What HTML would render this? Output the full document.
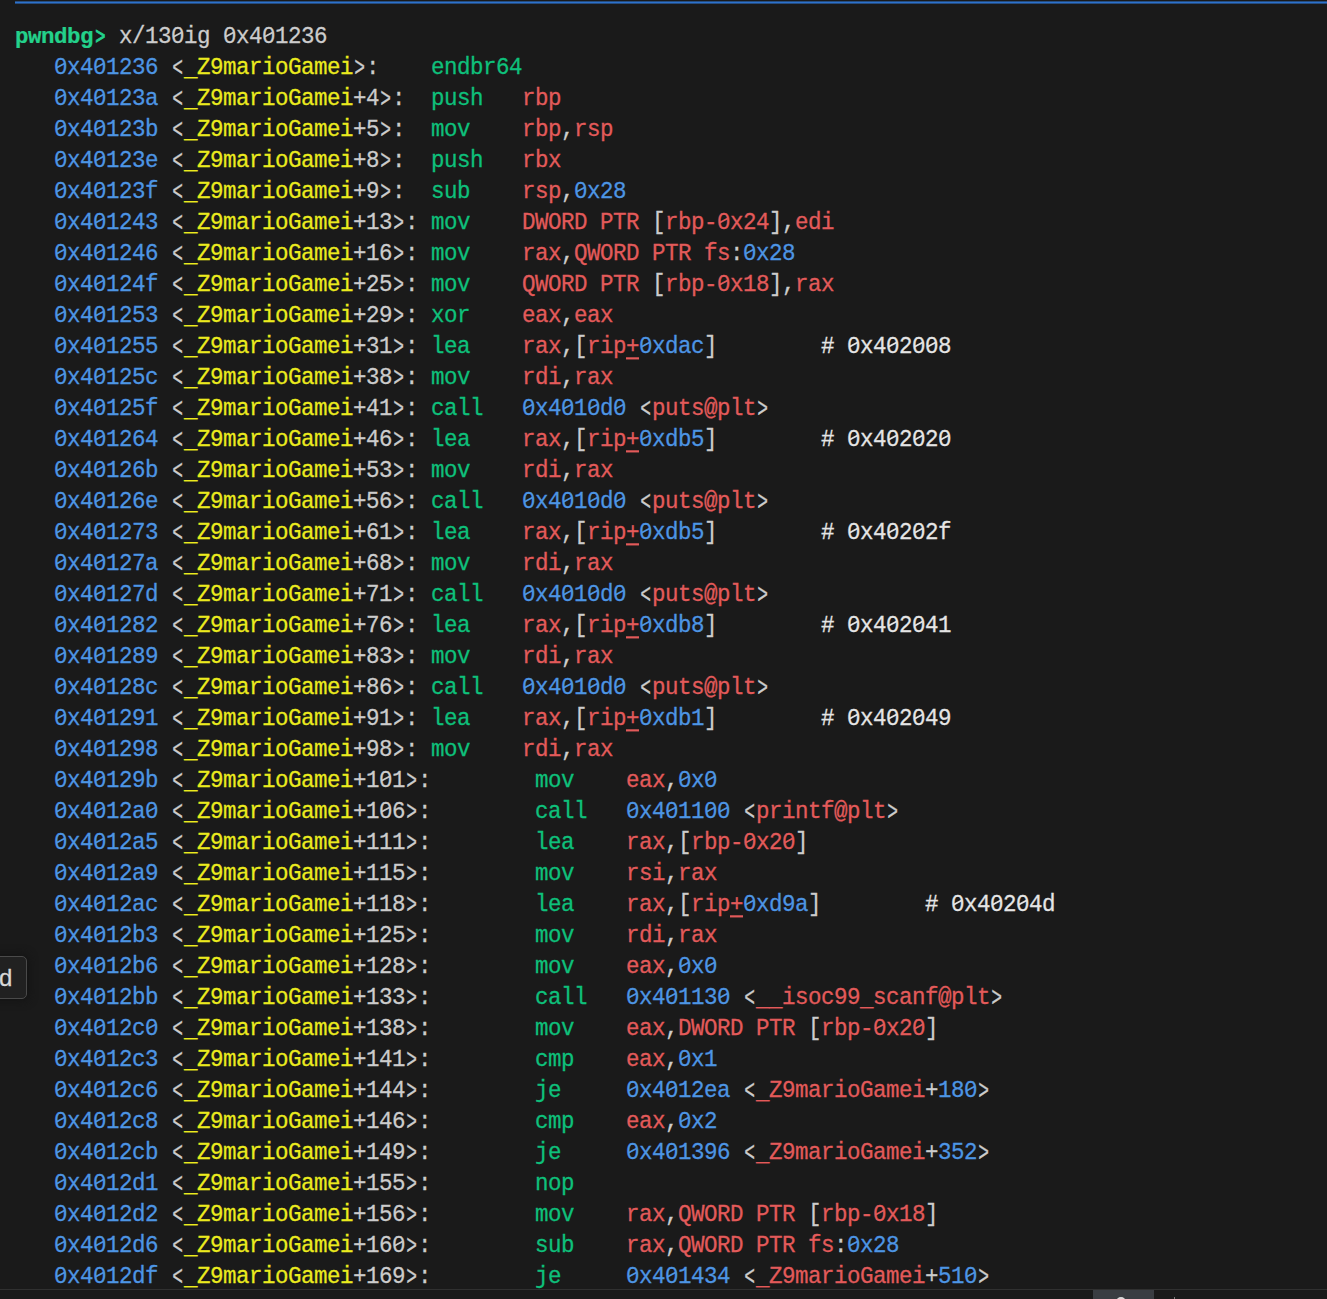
<!DOCTYPE html>
<html><head><meta charset="utf-8"><style>
html,body{margin:0;padding:0;}
body{width:1327px;height:1299px;background:#1a1a1a;position:relative;overflow:hidden;font-family:"Liberation Mono",monospace;font-size:22.5px;}
.t{position:absolute;white-space:pre;line-height:31px;height:31px;transform:scaleY(1.08);transform-origin:0 21.5px;-webkit-text-stroke:0.25px currentColor;}
.u{text-decoration:underline;text-decoration-thickness:1.5px;text-underline-offset:3.5px;}
.bd{font-weight:bold;transform:scaleY(0.99);}
.bd .ab{font-weight:normal;-webkit-text-stroke:0.9px currentColor;transform:translate(0.7px,0.6px) scale(0.76,1.1);}
#topline{position:absolute;left:15px;top:1px;width:1312px;height:3px;background:linear-gradient(#1d2a3a,#2d72cc 35%,#2d72cc 65%,#1d2a3a);}
svg.z{position:absolute;}
.ab{display:inline-block;transform:translateY(1.4px) scale(0.8,1.12);transform-origin:6.5px 13.6px;}
.us{position:relative;top:2px;}
#sep{position:absolute;left:0;top:1289px;width:1327px;height:1px;background:#303030;}
#tab{position:absolute;left:1093px;top:1290px;width:61px;height:9px;background:#3a3d42;}
#icon{position:absolute;left:1116px;top:1297px;width:10px;height:10px;border-radius:50%;background:#d8d8d8;}
#tick{position:absolute;left:1174px;top:1297px;width:1px;height:2px;background:#777;}
#dbox{position:absolute;left:-20px;top:956px;width:47px;height:43px;border:1px solid #4a4a4a;border-radius:5px;background:#212121;box-sizing:border-box;box-shadow:0 0 8px 2px #141414;}
#dbox span{position:absolute;left:18px;top:6px;color:#d8d8d8;font-family:"Liberation Sans",sans-serif;font-size:24px;line-height:30px;-webkit-text-stroke:0.3px #d8d8d8;}
</style></head><body>
<div id="topline"></div>

<div class="t bd" style="left:15px;top:21.5px;color:#23d18b;letter-spacing:-0.5000px">pwndbg<span class="ab">&gt;</span></div>
<div class="t" style="left:106px;top:21.5px;color:#cccccc;letter-spacing:-0.5000px"> x/130ig 0x401236</div>
<svg class="z" style="left:171px;top:25px" width="13" height="20"><rect x="4" y="8" width="5" height="4" fill="#1a1a1a"/><line x1="2.6" y1="11.8" x2="11.0" y2="7.2" stroke="#cccccc" stroke-width="1.85"/></svg>
<svg class="z" style="left:223px;top:25px" width="13" height="20"><rect x="4" y="8" width="5" height="4" fill="#1a1a1a"/><line x1="2.6" y1="11.8" x2="11.0" y2="7.2" stroke="#cccccc" stroke-width="1.85"/></svg>
<svg class="z" style="left:262px;top:25px" width="13" height="20"><rect x="4" y="8" width="5" height="4" fill="#1a1a1a"/><line x1="2.6" y1="11.8" x2="11.0" y2="7.2" stroke="#cccccc" stroke-width="1.85"/></svg>
<div class="t" style="left:54px;top:52.5px;color:#4d95e4;letter-spacing:-0.5000px">0x401236</div>
<svg class="z" style="left:54px;top:56px" width="13" height="20"><rect x="4" y="8" width="5" height="4" fill="#1a1a1a"/><line x1="2.6" y1="11.8" x2="11.0" y2="7.2" stroke="#4d95e4" stroke-width="1.85"/></svg>
<svg class="z" style="left:93px;top:56px" width="13" height="20"><rect x="4" y="8" width="5" height="4" fill="#1a1a1a"/><line x1="2.6" y1="11.8" x2="11.0" y2="7.2" stroke="#4d95e4" stroke-width="1.85"/></svg>
<div class="t" style="left:171px;top:52.5px;color:#cccccc;letter-spacing:-0.5000px"><span class="ab">&lt;</span></div>
<div class="t" style="left:184px;top:52.5px;color:#ebeb1e;letter-spacing:-0.5000px"><span class="us">_</span>Z9marioGamei</div>
<div class="t" style="left:353px;top:52.5px;color:#cccccc;letter-spacing:-0.5000px"><span class="ab">&gt;</span>:</div>
<div class="t" style="left:431px;top:52.5px;color:#0ec07b;letter-spacing:-0.5000px">endbr64</div>
<div class="t" style="left:54px;top:83.5px;color:#4d95e4;letter-spacing:-0.5000px">0x40123a</div>
<svg class="z" style="left:54px;top:87px" width="13" height="20"><rect x="4" y="8" width="5" height="4" fill="#1a1a1a"/><line x1="2.6" y1="11.8" x2="11.0" y2="7.2" stroke="#4d95e4" stroke-width="1.85"/></svg>
<svg class="z" style="left:93px;top:87px" width="13" height="20"><rect x="4" y="8" width="5" height="4" fill="#1a1a1a"/><line x1="2.6" y1="11.8" x2="11.0" y2="7.2" stroke="#4d95e4" stroke-width="1.85"/></svg>
<div class="t" style="left:171px;top:83.5px;color:#cccccc;letter-spacing:-0.5000px"><span class="ab">&lt;</span></div>
<div class="t" style="left:184px;top:83.5px;color:#ebeb1e;letter-spacing:-0.5000px"><span class="us">_</span>Z9marioGamei</div>
<div class="t" style="left:353px;top:83.5px;color:#cccccc;letter-spacing:-0.5000px">+4</div>
<div class="t" style="left:379px;top:83.5px;color:#cccccc;letter-spacing:-0.5000px"><span class="ab">&gt;</span>:</div>
<div class="t" style="left:431px;top:83.5px;color:#0ec07b;letter-spacing:-0.5000px">push</div>
<div class="t" style="left:522px;top:83.5px;color:#e35a5a;letter-spacing:-0.5000px">rbp</div>
<div class="t" style="left:54px;top:114.5px;color:#4d95e4;letter-spacing:-0.5000px">0x40123b</div>
<svg class="z" style="left:54px;top:118px" width="13" height="20"><rect x="4" y="8" width="5" height="4" fill="#1a1a1a"/><line x1="2.6" y1="11.8" x2="11.0" y2="7.2" stroke="#4d95e4" stroke-width="1.85"/></svg>
<svg class="z" style="left:93px;top:118px" width="13" height="20"><rect x="4" y="8" width="5" height="4" fill="#1a1a1a"/><line x1="2.6" y1="11.8" x2="11.0" y2="7.2" stroke="#4d95e4" stroke-width="1.85"/></svg>
<div class="t" style="left:171px;top:114.5px;color:#cccccc;letter-spacing:-0.5000px"><span class="ab">&lt;</span></div>
<div class="t" style="left:184px;top:114.5px;color:#ebeb1e;letter-spacing:-0.5000px"><span class="us">_</span>Z9marioGamei</div>
<div class="t" style="left:353px;top:114.5px;color:#cccccc;letter-spacing:-0.5000px">+5</div>
<div class="t" style="left:379px;top:114.5px;color:#cccccc;letter-spacing:-0.5000px"><span class="ab">&gt;</span>:</div>
<div class="t" style="left:431px;top:114.5px;color:#0ec07b;letter-spacing:-0.5000px">mov</div>
<div class="t" style="left:522px;top:114.5px;color:#e35a5a;letter-spacing:-0.5000px">rbp</div>
<div class="t" style="left:561px;top:114.5px;color:#cccccc;letter-spacing:-0.5000px">,</div>
<div class="t" style="left:574px;top:114.5px;color:#e35a5a;letter-spacing:-0.5000px">rsp</div>
<div class="t" style="left:54px;top:145.5px;color:#4d95e4;letter-spacing:-0.5000px">0x40123e</div>
<svg class="z" style="left:54px;top:149px" width="13" height="20"><rect x="4" y="8" width="5" height="4" fill="#1a1a1a"/><line x1="2.6" y1="11.8" x2="11.0" y2="7.2" stroke="#4d95e4" stroke-width="1.85"/></svg>
<svg class="z" style="left:93px;top:149px" width="13" height="20"><rect x="4" y="8" width="5" height="4" fill="#1a1a1a"/><line x1="2.6" y1="11.8" x2="11.0" y2="7.2" stroke="#4d95e4" stroke-width="1.85"/></svg>
<div class="t" style="left:171px;top:145.5px;color:#cccccc;letter-spacing:-0.5000px"><span class="ab">&lt;</span></div>
<div class="t" style="left:184px;top:145.5px;color:#ebeb1e;letter-spacing:-0.5000px"><span class="us">_</span>Z9marioGamei</div>
<div class="t" style="left:353px;top:145.5px;color:#cccccc;letter-spacing:-0.5000px">+8</div>
<div class="t" style="left:379px;top:145.5px;color:#cccccc;letter-spacing:-0.5000px"><span class="ab">&gt;</span>:</div>
<div class="t" style="left:431px;top:145.5px;color:#0ec07b;letter-spacing:-0.5000px">push</div>
<div class="t" style="left:522px;top:145.5px;color:#e35a5a;letter-spacing:-0.5000px">rbx</div>
<div class="t" style="left:54px;top:176.5px;color:#4d95e4;letter-spacing:-0.5000px">0x40123f</div>
<svg class="z" style="left:54px;top:180px" width="13" height="20"><rect x="4" y="8" width="5" height="4" fill="#1a1a1a"/><line x1="2.6" y1="11.8" x2="11.0" y2="7.2" stroke="#4d95e4" stroke-width="1.85"/></svg>
<svg class="z" style="left:93px;top:180px" width="13" height="20"><rect x="4" y="8" width="5" height="4" fill="#1a1a1a"/><line x1="2.6" y1="11.8" x2="11.0" y2="7.2" stroke="#4d95e4" stroke-width="1.85"/></svg>
<div class="t" style="left:171px;top:176.5px;color:#cccccc;letter-spacing:-0.5000px"><span class="ab">&lt;</span></div>
<div class="t" style="left:184px;top:176.5px;color:#ebeb1e;letter-spacing:-0.5000px"><span class="us">_</span>Z9marioGamei</div>
<div class="t" style="left:353px;top:176.5px;color:#cccccc;letter-spacing:-0.5000px">+9</div>
<div class="t" style="left:379px;top:176.5px;color:#cccccc;letter-spacing:-0.5000px"><span class="ab">&gt;</span>:</div>
<div class="t" style="left:431px;top:176.5px;color:#0ec07b;letter-spacing:-0.5000px">sub</div>
<div class="t" style="left:522px;top:176.5px;color:#e35a5a;letter-spacing:-0.5000px">rsp</div>
<div class="t" style="left:561px;top:176.5px;color:#cccccc;letter-spacing:-0.5000px">,</div>
<div class="t" style="left:574px;top:176.5px;color:#4d95e4;letter-spacing:-0.5000px">0x28</div>
<svg class="z" style="left:574px;top:180px" width="13" height="20"><rect x="4" y="8" width="5" height="4" fill="#1a1a1a"/><line x1="2.6" y1="11.8" x2="11.0" y2="7.2" stroke="#4d95e4" stroke-width="1.85"/></svg>
<div class="t" style="left:54px;top:207.5px;color:#4d95e4;letter-spacing:-0.5000px">0x401243</div>
<svg class="z" style="left:54px;top:211px" width="13" height="20"><rect x="4" y="8" width="5" height="4" fill="#1a1a1a"/><line x1="2.6" y1="11.8" x2="11.0" y2="7.2" stroke="#4d95e4" stroke-width="1.85"/></svg>
<svg class="z" style="left:93px;top:211px" width="13" height="20"><rect x="4" y="8" width="5" height="4" fill="#1a1a1a"/><line x1="2.6" y1="11.8" x2="11.0" y2="7.2" stroke="#4d95e4" stroke-width="1.85"/></svg>
<div class="t" style="left:171px;top:207.5px;color:#cccccc;letter-spacing:-0.5000px"><span class="ab">&lt;</span></div>
<div class="t" style="left:184px;top:207.5px;color:#ebeb1e;letter-spacing:-0.5000px"><span class="us">_</span>Z9marioGamei</div>
<div class="t" style="left:353px;top:207.5px;color:#cccccc;letter-spacing:-0.5000px">+13</div>
<div class="t" style="left:392px;top:207.5px;color:#cccccc;letter-spacing:-0.5000px"><span class="ab">&gt;</span>:</div>
<div class="t" style="left:431px;top:207.5px;color:#0ec07b;letter-spacing:-0.5000px">mov</div>
<div class="t" style="left:522px;top:207.5px;color:#e35a5a;letter-spacing:-0.5000px">DWORD PTR</div>
<div class="t" style="left:652px;top:207.5px;color:#cccccc;letter-spacing:-0.5000px">[</div>
<div class="t" style="left:665px;top:207.5px;color:#e35a5a;letter-spacing:-0.5000px">rbp-0x24</div>
<svg class="z" style="left:717px;top:211px" width="13" height="20"><rect x="4" y="8" width="5" height="4" fill="#1a1a1a"/><line x1="2.6" y1="11.8" x2="11.0" y2="7.2" stroke="#e35a5a" stroke-width="1.85"/></svg>
<div class="t" style="left:769px;top:207.5px;color:#cccccc;letter-spacing:-0.5000px">]</div>
<div class="t" style="left:782px;top:207.5px;color:#cccccc;letter-spacing:-0.5000px">,</div>
<div class="t" style="left:795px;top:207.5px;color:#e35a5a;letter-spacing:-0.5000px">edi</div>
<div class="t" style="left:54px;top:238.5px;color:#4d95e4;letter-spacing:-0.5000px">0x401246</div>
<svg class="z" style="left:54px;top:242px" width="13" height="20"><rect x="4" y="8" width="5" height="4" fill="#1a1a1a"/><line x1="2.6" y1="11.8" x2="11.0" y2="7.2" stroke="#4d95e4" stroke-width="1.85"/></svg>
<svg class="z" style="left:93px;top:242px" width="13" height="20"><rect x="4" y="8" width="5" height="4" fill="#1a1a1a"/><line x1="2.6" y1="11.8" x2="11.0" y2="7.2" stroke="#4d95e4" stroke-width="1.85"/></svg>
<div class="t" style="left:171px;top:238.5px;color:#cccccc;letter-spacing:-0.5000px"><span class="ab">&lt;</span></div>
<div class="t" style="left:184px;top:238.5px;color:#ebeb1e;letter-spacing:-0.5000px"><span class="us">_</span>Z9marioGamei</div>
<div class="t" style="left:353px;top:238.5px;color:#cccccc;letter-spacing:-0.5000px">+16</div>
<div class="t" style="left:392px;top:238.5px;color:#cccccc;letter-spacing:-0.5000px"><span class="ab">&gt;</span>:</div>
<div class="t" style="left:431px;top:238.5px;color:#0ec07b;letter-spacing:-0.5000px">mov</div>
<div class="t" style="left:522px;top:238.5px;color:#e35a5a;letter-spacing:-0.5000px">rax</div>
<div class="t" style="left:561px;top:238.5px;color:#cccccc;letter-spacing:-0.5000px">,</div>
<div class="t" style="left:574px;top:238.5px;color:#e35a5a;letter-spacing:-0.5000px">QWORD PTR fs</div>
<div class="t" style="left:730px;top:238.5px;color:#cccccc;letter-spacing:-0.5000px">:</div>
<div class="t" style="left:743px;top:238.5px;color:#4d95e4;letter-spacing:-0.5000px">0x28</div>
<svg class="z" style="left:743px;top:242px" width="13" height="20"><rect x="4" y="8" width="5" height="4" fill="#1a1a1a"/><line x1="2.6" y1="11.8" x2="11.0" y2="7.2" stroke="#4d95e4" stroke-width="1.85"/></svg>
<div class="t" style="left:54px;top:269.5px;color:#4d95e4;letter-spacing:-0.5000px">0x40124f</div>
<svg class="z" style="left:54px;top:273px" width="13" height="20"><rect x="4" y="8" width="5" height="4" fill="#1a1a1a"/><line x1="2.6" y1="11.8" x2="11.0" y2="7.2" stroke="#4d95e4" stroke-width="1.85"/></svg>
<svg class="z" style="left:93px;top:273px" width="13" height="20"><rect x="4" y="8" width="5" height="4" fill="#1a1a1a"/><line x1="2.6" y1="11.8" x2="11.0" y2="7.2" stroke="#4d95e4" stroke-width="1.85"/></svg>
<div class="t" style="left:171px;top:269.5px;color:#cccccc;letter-spacing:-0.5000px"><span class="ab">&lt;</span></div>
<div class="t" style="left:184px;top:269.5px;color:#ebeb1e;letter-spacing:-0.5000px"><span class="us">_</span>Z9marioGamei</div>
<div class="t" style="left:353px;top:269.5px;color:#cccccc;letter-spacing:-0.5000px">+25</div>
<div class="t" style="left:392px;top:269.5px;color:#cccccc;letter-spacing:-0.5000px"><span class="ab">&gt;</span>:</div>
<div class="t" style="left:431px;top:269.5px;color:#0ec07b;letter-spacing:-0.5000px">mov</div>
<div class="t" style="left:522px;top:269.5px;color:#e35a5a;letter-spacing:-0.5000px">QWORD PTR</div>
<div class="t" style="left:652px;top:269.5px;color:#cccccc;letter-spacing:-0.5000px">[</div>
<div class="t" style="left:665px;top:269.5px;color:#e35a5a;letter-spacing:-0.5000px">rbp-0x18</div>
<svg class="z" style="left:717px;top:273px" width="13" height="20"><rect x="4" y="8" width="5" height="4" fill="#1a1a1a"/><line x1="2.6" y1="11.8" x2="11.0" y2="7.2" stroke="#e35a5a" stroke-width="1.85"/></svg>
<div class="t" style="left:769px;top:269.5px;color:#cccccc;letter-spacing:-0.5000px">]</div>
<div class="t" style="left:782px;top:269.5px;color:#cccccc;letter-spacing:-0.5000px">,</div>
<div class="t" style="left:795px;top:269.5px;color:#e35a5a;letter-spacing:-0.5000px">rax</div>
<div class="t" style="left:54px;top:300.5px;color:#4d95e4;letter-spacing:-0.5000px">0x401253</div>
<svg class="z" style="left:54px;top:304px" width="13" height="20"><rect x="4" y="8" width="5" height="4" fill="#1a1a1a"/><line x1="2.6" y1="11.8" x2="11.0" y2="7.2" stroke="#4d95e4" stroke-width="1.85"/></svg>
<svg class="z" style="left:93px;top:304px" width="13" height="20"><rect x="4" y="8" width="5" height="4" fill="#1a1a1a"/><line x1="2.6" y1="11.8" x2="11.0" y2="7.2" stroke="#4d95e4" stroke-width="1.85"/></svg>
<div class="t" style="left:171px;top:300.5px;color:#cccccc;letter-spacing:-0.5000px"><span class="ab">&lt;</span></div>
<div class="t" style="left:184px;top:300.5px;color:#ebeb1e;letter-spacing:-0.5000px"><span class="us">_</span>Z9marioGamei</div>
<div class="t" style="left:353px;top:300.5px;color:#cccccc;letter-spacing:-0.5000px">+29</div>
<div class="t" style="left:392px;top:300.5px;color:#cccccc;letter-spacing:-0.5000px"><span class="ab">&gt;</span>:</div>
<div class="t" style="left:431px;top:300.5px;color:#0ec07b;letter-spacing:-0.5000px">xor</div>
<div class="t" style="left:522px;top:300.5px;color:#e35a5a;letter-spacing:-0.5000px">eax</div>
<div class="t" style="left:561px;top:300.5px;color:#cccccc;letter-spacing:-0.5000px">,</div>
<div class="t" style="left:574px;top:300.5px;color:#e35a5a;letter-spacing:-0.5000px">eax</div>
<div class="t" style="left:54px;top:331.5px;color:#4d95e4;letter-spacing:-0.5000px">0x401255</div>
<svg class="z" style="left:54px;top:335px" width="13" height="20"><rect x="4" y="8" width="5" height="4" fill="#1a1a1a"/><line x1="2.6" y1="11.8" x2="11.0" y2="7.2" stroke="#4d95e4" stroke-width="1.85"/></svg>
<svg class="z" style="left:93px;top:335px" width="13" height="20"><rect x="4" y="8" width="5" height="4" fill="#1a1a1a"/><line x1="2.6" y1="11.8" x2="11.0" y2="7.2" stroke="#4d95e4" stroke-width="1.85"/></svg>
<div class="t" style="left:171px;top:331.5px;color:#cccccc;letter-spacing:-0.5000px"><span class="ab">&lt;</span></div>
<div class="t" style="left:184px;top:331.5px;color:#ebeb1e;letter-spacing:-0.5000px"><span class="us">_</span>Z9marioGamei</div>
<div class="t" style="left:353px;top:331.5px;color:#cccccc;letter-spacing:-0.5000px">+31</div>
<div class="t" style="left:392px;top:331.5px;color:#cccccc;letter-spacing:-0.5000px"><span class="ab">&gt;</span>:</div>
<div class="t" style="left:431px;top:331.5px;color:#0ec07b;letter-spacing:-0.5000px">lea</div>
<div class="t" style="left:522px;top:331.5px;color:#e35a5a;letter-spacing:-0.5000px">rax</div>
<div class="t" style="left:561px;top:331.5px;color:#cccccc;letter-spacing:-0.5000px">,</div>
<div class="t" style="left:574px;top:331.5px;color:#cccccc;letter-spacing:-0.5000px">[</div>
<div class="t" style="left:587px;top:331.5px;color:#e35a5a;letter-spacing:-0.5000px">rip</div>
<div class="t u" style="left:626px;top:331.5px;color:#e35a5a;letter-spacing:-0.5000px">+</div>
<div class="t" style="left:639px;top:331.5px;color:#4d95e4;letter-spacing:-0.5000px">0xdac</div>
<svg class="z" style="left:639px;top:335px" width="13" height="20"><rect x="4" y="8" width="5" height="4" fill="#1a1a1a"/><line x1="2.6" y1="11.8" x2="11.0" y2="7.2" stroke="#4d95e4" stroke-width="1.85"/></svg>
<div class="t" style="left:704px;top:331.5px;color:#cccccc;letter-spacing:-0.5000px">]</div>
<div class="t" style="left:821px;top:331.5px;color:#e5e5e5;letter-spacing:-0.5000px"># 0x402008</div>
<svg class="z" style="left:847px;top:335px" width="13" height="20"><rect x="4" y="8" width="5" height="4" fill="#1a1a1a"/><line x1="2.6" y1="11.8" x2="11.0" y2="7.2" stroke="#e5e5e5" stroke-width="1.85"/></svg>
<svg class="z" style="left:886px;top:335px" width="13" height="20"><rect x="4" y="8" width="5" height="4" fill="#1a1a1a"/><line x1="2.6" y1="11.8" x2="11.0" y2="7.2" stroke="#e5e5e5" stroke-width="1.85"/></svg>
<svg class="z" style="left:912px;top:335px" width="13" height="20"><rect x="4" y="8" width="5" height="4" fill="#1a1a1a"/><line x1="2.6" y1="11.8" x2="11.0" y2="7.2" stroke="#e5e5e5" stroke-width="1.85"/></svg>
<svg class="z" style="left:925px;top:335px" width="13" height="20"><rect x="4" y="8" width="5" height="4" fill="#1a1a1a"/><line x1="2.6" y1="11.8" x2="11.0" y2="7.2" stroke="#e5e5e5" stroke-width="1.85"/></svg>
<div class="t" style="left:54px;top:362.5px;color:#4d95e4;letter-spacing:-0.5000px">0x40125c</div>
<svg class="z" style="left:54px;top:366px" width="13" height="20"><rect x="4" y="8" width="5" height="4" fill="#1a1a1a"/><line x1="2.6" y1="11.8" x2="11.0" y2="7.2" stroke="#4d95e4" stroke-width="1.85"/></svg>
<svg class="z" style="left:93px;top:366px" width="13" height="20"><rect x="4" y="8" width="5" height="4" fill="#1a1a1a"/><line x1="2.6" y1="11.8" x2="11.0" y2="7.2" stroke="#4d95e4" stroke-width="1.85"/></svg>
<div class="t" style="left:171px;top:362.5px;color:#cccccc;letter-spacing:-0.5000px"><span class="ab">&lt;</span></div>
<div class="t" style="left:184px;top:362.5px;color:#ebeb1e;letter-spacing:-0.5000px"><span class="us">_</span>Z9marioGamei</div>
<div class="t" style="left:353px;top:362.5px;color:#cccccc;letter-spacing:-0.5000px">+38</div>
<div class="t" style="left:392px;top:362.5px;color:#cccccc;letter-spacing:-0.5000px"><span class="ab">&gt;</span>:</div>
<div class="t" style="left:431px;top:362.5px;color:#0ec07b;letter-spacing:-0.5000px">mov</div>
<div class="t" style="left:522px;top:362.5px;color:#e35a5a;letter-spacing:-0.5000px">rdi</div>
<div class="t" style="left:561px;top:362.5px;color:#cccccc;letter-spacing:-0.5000px">,</div>
<div class="t" style="left:574px;top:362.5px;color:#e35a5a;letter-spacing:-0.5000px">rax</div>
<div class="t" style="left:54px;top:393.5px;color:#4d95e4;letter-spacing:-0.5000px">0x40125f</div>
<svg class="z" style="left:54px;top:397px" width="13" height="20"><rect x="4" y="8" width="5" height="4" fill="#1a1a1a"/><line x1="2.6" y1="11.8" x2="11.0" y2="7.2" stroke="#4d95e4" stroke-width="1.85"/></svg>
<svg class="z" style="left:93px;top:397px" width="13" height="20"><rect x="4" y="8" width="5" height="4" fill="#1a1a1a"/><line x1="2.6" y1="11.8" x2="11.0" y2="7.2" stroke="#4d95e4" stroke-width="1.85"/></svg>
<div class="t" style="left:171px;top:393.5px;color:#cccccc;letter-spacing:-0.5000px"><span class="ab">&lt;</span></div>
<div class="t" style="left:184px;top:393.5px;color:#ebeb1e;letter-spacing:-0.5000px"><span class="us">_</span>Z9marioGamei</div>
<div class="t" style="left:353px;top:393.5px;color:#cccccc;letter-spacing:-0.5000px">+41</div>
<div class="t" style="left:392px;top:393.5px;color:#cccccc;letter-spacing:-0.5000px"><span class="ab">&gt;</span>:</div>
<div class="t" style="left:431px;top:393.5px;color:#0ec07b;letter-spacing:-0.5000px">call</div>
<div class="t" style="left:522px;top:393.5px;color:#4d95e4;letter-spacing:-0.5000px">0x4010d0</div>
<svg class="z" style="left:522px;top:397px" width="13" height="20"><rect x="4" y="8" width="5" height="4" fill="#1a1a1a"/><line x1="2.6" y1="11.8" x2="11.0" y2="7.2" stroke="#4d95e4" stroke-width="1.85"/></svg>
<svg class="z" style="left:561px;top:397px" width="13" height="20"><rect x="4" y="8" width="5" height="4" fill="#1a1a1a"/><line x1="2.6" y1="11.8" x2="11.0" y2="7.2" stroke="#4d95e4" stroke-width="1.85"/></svg>
<svg class="z" style="left:587px;top:397px" width="13" height="20"><rect x="4" y="8" width="5" height="4" fill="#1a1a1a"/><line x1="2.6" y1="11.8" x2="11.0" y2="7.2" stroke="#4d95e4" stroke-width="1.85"/></svg>
<svg class="z" style="left:613px;top:397px" width="13" height="20"><rect x="4" y="8" width="5" height="4" fill="#1a1a1a"/><line x1="2.6" y1="11.8" x2="11.0" y2="7.2" stroke="#4d95e4" stroke-width="1.85"/></svg>
<div class="t" style="left:639px;top:393.5px;color:#cccccc;letter-spacing:-0.5000px"><span class="ab">&lt;</span></div>
<div class="t" style="left:652px;top:393.5px;color:#e35a5a;letter-spacing:-0.5000px">puts@plt</div>
<div class="t" style="left:756px;top:393.5px;color:#cccccc;letter-spacing:-0.5000px"><span class="ab">&gt;</span></div>
<div class="t" style="left:54px;top:424.5px;color:#4d95e4;letter-spacing:-0.5000px">0x401264</div>
<svg class="z" style="left:54px;top:428px" width="13" height="20"><rect x="4" y="8" width="5" height="4" fill="#1a1a1a"/><line x1="2.6" y1="11.8" x2="11.0" y2="7.2" stroke="#4d95e4" stroke-width="1.85"/></svg>
<svg class="z" style="left:93px;top:428px" width="13" height="20"><rect x="4" y="8" width="5" height="4" fill="#1a1a1a"/><line x1="2.6" y1="11.8" x2="11.0" y2="7.2" stroke="#4d95e4" stroke-width="1.85"/></svg>
<div class="t" style="left:171px;top:424.5px;color:#cccccc;letter-spacing:-0.5000px"><span class="ab">&lt;</span></div>
<div class="t" style="left:184px;top:424.5px;color:#ebeb1e;letter-spacing:-0.5000px"><span class="us">_</span>Z9marioGamei</div>
<div class="t" style="left:353px;top:424.5px;color:#cccccc;letter-spacing:-0.5000px">+46</div>
<div class="t" style="left:392px;top:424.5px;color:#cccccc;letter-spacing:-0.5000px"><span class="ab">&gt;</span>:</div>
<div class="t" style="left:431px;top:424.5px;color:#0ec07b;letter-spacing:-0.5000px">lea</div>
<div class="t" style="left:522px;top:424.5px;color:#e35a5a;letter-spacing:-0.5000px">rax</div>
<div class="t" style="left:561px;top:424.5px;color:#cccccc;letter-spacing:-0.5000px">,</div>
<div class="t" style="left:574px;top:424.5px;color:#cccccc;letter-spacing:-0.5000px">[</div>
<div class="t" style="left:587px;top:424.5px;color:#e35a5a;letter-spacing:-0.5000px">rip</div>
<div class="t u" style="left:626px;top:424.5px;color:#e35a5a;letter-spacing:-0.5000px">+</div>
<div class="t" style="left:639px;top:424.5px;color:#4d95e4;letter-spacing:-0.5000px">0xdb5</div>
<svg class="z" style="left:639px;top:428px" width="13" height="20"><rect x="4" y="8" width="5" height="4" fill="#1a1a1a"/><line x1="2.6" y1="11.8" x2="11.0" y2="7.2" stroke="#4d95e4" stroke-width="1.85"/></svg>
<div class="t" style="left:704px;top:424.5px;color:#cccccc;letter-spacing:-0.5000px">]</div>
<div class="t" style="left:821px;top:424.5px;color:#e5e5e5;letter-spacing:-0.5000px"># 0x402020</div>
<svg class="z" style="left:847px;top:428px" width="13" height="20"><rect x="4" y="8" width="5" height="4" fill="#1a1a1a"/><line x1="2.6" y1="11.8" x2="11.0" y2="7.2" stroke="#e5e5e5" stroke-width="1.85"/></svg>
<svg class="z" style="left:886px;top:428px" width="13" height="20"><rect x="4" y="8" width="5" height="4" fill="#1a1a1a"/><line x1="2.6" y1="11.8" x2="11.0" y2="7.2" stroke="#e5e5e5" stroke-width="1.85"/></svg>
<svg class="z" style="left:912px;top:428px" width="13" height="20"><rect x="4" y="8" width="5" height="4" fill="#1a1a1a"/><line x1="2.6" y1="11.8" x2="11.0" y2="7.2" stroke="#e5e5e5" stroke-width="1.85"/></svg>
<svg class="z" style="left:938px;top:428px" width="13" height="20"><rect x="4" y="8" width="5" height="4" fill="#1a1a1a"/><line x1="2.6" y1="11.8" x2="11.0" y2="7.2" stroke="#e5e5e5" stroke-width="1.85"/></svg>
<div class="t" style="left:54px;top:455.5px;color:#4d95e4;letter-spacing:-0.5000px">0x40126b</div>
<svg class="z" style="left:54px;top:459px" width="13" height="20"><rect x="4" y="8" width="5" height="4" fill="#1a1a1a"/><line x1="2.6" y1="11.8" x2="11.0" y2="7.2" stroke="#4d95e4" stroke-width="1.85"/></svg>
<svg class="z" style="left:93px;top:459px" width="13" height="20"><rect x="4" y="8" width="5" height="4" fill="#1a1a1a"/><line x1="2.6" y1="11.8" x2="11.0" y2="7.2" stroke="#4d95e4" stroke-width="1.85"/></svg>
<div class="t" style="left:171px;top:455.5px;color:#cccccc;letter-spacing:-0.5000px"><span class="ab">&lt;</span></div>
<div class="t" style="left:184px;top:455.5px;color:#ebeb1e;letter-spacing:-0.5000px"><span class="us">_</span>Z9marioGamei</div>
<div class="t" style="left:353px;top:455.5px;color:#cccccc;letter-spacing:-0.5000px">+53</div>
<div class="t" style="left:392px;top:455.5px;color:#cccccc;letter-spacing:-0.5000px"><span class="ab">&gt;</span>:</div>
<div class="t" style="left:431px;top:455.5px;color:#0ec07b;letter-spacing:-0.5000px">mov</div>
<div class="t" style="left:522px;top:455.5px;color:#e35a5a;letter-spacing:-0.5000px">rdi</div>
<div class="t" style="left:561px;top:455.5px;color:#cccccc;letter-spacing:-0.5000px">,</div>
<div class="t" style="left:574px;top:455.5px;color:#e35a5a;letter-spacing:-0.5000px">rax</div>
<div class="t" style="left:54px;top:486.5px;color:#4d95e4;letter-spacing:-0.5000px">0x40126e</div>
<svg class="z" style="left:54px;top:490px" width="13" height="20"><rect x="4" y="8" width="5" height="4" fill="#1a1a1a"/><line x1="2.6" y1="11.8" x2="11.0" y2="7.2" stroke="#4d95e4" stroke-width="1.85"/></svg>
<svg class="z" style="left:93px;top:490px" width="13" height="20"><rect x="4" y="8" width="5" height="4" fill="#1a1a1a"/><line x1="2.6" y1="11.8" x2="11.0" y2="7.2" stroke="#4d95e4" stroke-width="1.85"/></svg>
<div class="t" style="left:171px;top:486.5px;color:#cccccc;letter-spacing:-0.5000px"><span class="ab">&lt;</span></div>
<div class="t" style="left:184px;top:486.5px;color:#ebeb1e;letter-spacing:-0.5000px"><span class="us">_</span>Z9marioGamei</div>
<div class="t" style="left:353px;top:486.5px;color:#cccccc;letter-spacing:-0.5000px">+56</div>
<div class="t" style="left:392px;top:486.5px;color:#cccccc;letter-spacing:-0.5000px"><span class="ab">&gt;</span>:</div>
<div class="t" style="left:431px;top:486.5px;color:#0ec07b;letter-spacing:-0.5000px">call</div>
<div class="t" style="left:522px;top:486.5px;color:#4d95e4;letter-spacing:-0.5000px">0x4010d0</div>
<svg class="z" style="left:522px;top:490px" width="13" height="20"><rect x="4" y="8" width="5" height="4" fill="#1a1a1a"/><line x1="2.6" y1="11.8" x2="11.0" y2="7.2" stroke="#4d95e4" stroke-width="1.85"/></svg>
<svg class="z" style="left:561px;top:490px" width="13" height="20"><rect x="4" y="8" width="5" height="4" fill="#1a1a1a"/><line x1="2.6" y1="11.8" x2="11.0" y2="7.2" stroke="#4d95e4" stroke-width="1.85"/></svg>
<svg class="z" style="left:587px;top:490px" width="13" height="20"><rect x="4" y="8" width="5" height="4" fill="#1a1a1a"/><line x1="2.6" y1="11.8" x2="11.0" y2="7.2" stroke="#4d95e4" stroke-width="1.85"/></svg>
<svg class="z" style="left:613px;top:490px" width="13" height="20"><rect x="4" y="8" width="5" height="4" fill="#1a1a1a"/><line x1="2.6" y1="11.8" x2="11.0" y2="7.2" stroke="#4d95e4" stroke-width="1.85"/></svg>
<div class="t" style="left:639px;top:486.5px;color:#cccccc;letter-spacing:-0.5000px"><span class="ab">&lt;</span></div>
<div class="t" style="left:652px;top:486.5px;color:#e35a5a;letter-spacing:-0.5000px">puts@plt</div>
<div class="t" style="left:756px;top:486.5px;color:#cccccc;letter-spacing:-0.5000px"><span class="ab">&gt;</span></div>
<div class="t" style="left:54px;top:517.5px;color:#4d95e4;letter-spacing:-0.5000px">0x401273</div>
<svg class="z" style="left:54px;top:521px" width="13" height="20"><rect x="4" y="8" width="5" height="4" fill="#1a1a1a"/><line x1="2.6" y1="11.8" x2="11.0" y2="7.2" stroke="#4d95e4" stroke-width="1.85"/></svg>
<svg class="z" style="left:93px;top:521px" width="13" height="20"><rect x="4" y="8" width="5" height="4" fill="#1a1a1a"/><line x1="2.6" y1="11.8" x2="11.0" y2="7.2" stroke="#4d95e4" stroke-width="1.85"/></svg>
<div class="t" style="left:171px;top:517.5px;color:#cccccc;letter-spacing:-0.5000px"><span class="ab">&lt;</span></div>
<div class="t" style="left:184px;top:517.5px;color:#ebeb1e;letter-spacing:-0.5000px"><span class="us">_</span>Z9marioGamei</div>
<div class="t" style="left:353px;top:517.5px;color:#cccccc;letter-spacing:-0.5000px">+61</div>
<div class="t" style="left:392px;top:517.5px;color:#cccccc;letter-spacing:-0.5000px"><span class="ab">&gt;</span>:</div>
<div class="t" style="left:431px;top:517.5px;color:#0ec07b;letter-spacing:-0.5000px">lea</div>
<div class="t" style="left:522px;top:517.5px;color:#e35a5a;letter-spacing:-0.5000px">rax</div>
<div class="t" style="left:561px;top:517.5px;color:#cccccc;letter-spacing:-0.5000px">,</div>
<div class="t" style="left:574px;top:517.5px;color:#cccccc;letter-spacing:-0.5000px">[</div>
<div class="t" style="left:587px;top:517.5px;color:#e35a5a;letter-spacing:-0.5000px">rip</div>
<div class="t u" style="left:626px;top:517.5px;color:#e35a5a;letter-spacing:-0.5000px">+</div>
<div class="t" style="left:639px;top:517.5px;color:#4d95e4;letter-spacing:-0.5000px">0xdb5</div>
<svg class="z" style="left:639px;top:521px" width="13" height="20"><rect x="4" y="8" width="5" height="4" fill="#1a1a1a"/><line x1="2.6" y1="11.8" x2="11.0" y2="7.2" stroke="#4d95e4" stroke-width="1.85"/></svg>
<div class="t" style="left:704px;top:517.5px;color:#cccccc;letter-spacing:-0.5000px">]</div>
<div class="t" style="left:821px;top:517.5px;color:#e5e5e5;letter-spacing:-0.5000px"># 0x40202f</div>
<svg class="z" style="left:847px;top:521px" width="13" height="20"><rect x="4" y="8" width="5" height="4" fill="#1a1a1a"/><line x1="2.6" y1="11.8" x2="11.0" y2="7.2" stroke="#e5e5e5" stroke-width="1.85"/></svg>
<svg class="z" style="left:886px;top:521px" width="13" height="20"><rect x="4" y="8" width="5" height="4" fill="#1a1a1a"/><line x1="2.6" y1="11.8" x2="11.0" y2="7.2" stroke="#e5e5e5" stroke-width="1.85"/></svg>
<svg class="z" style="left:912px;top:521px" width="13" height="20"><rect x="4" y="8" width="5" height="4" fill="#1a1a1a"/><line x1="2.6" y1="11.8" x2="11.0" y2="7.2" stroke="#e5e5e5" stroke-width="1.85"/></svg>
<div class="t" style="left:54px;top:548.5px;color:#4d95e4;letter-spacing:-0.5000px">0x40127a</div>
<svg class="z" style="left:54px;top:552px" width="13" height="20"><rect x="4" y="8" width="5" height="4" fill="#1a1a1a"/><line x1="2.6" y1="11.8" x2="11.0" y2="7.2" stroke="#4d95e4" stroke-width="1.85"/></svg>
<svg class="z" style="left:93px;top:552px" width="13" height="20"><rect x="4" y="8" width="5" height="4" fill="#1a1a1a"/><line x1="2.6" y1="11.8" x2="11.0" y2="7.2" stroke="#4d95e4" stroke-width="1.85"/></svg>
<div class="t" style="left:171px;top:548.5px;color:#cccccc;letter-spacing:-0.5000px"><span class="ab">&lt;</span></div>
<div class="t" style="left:184px;top:548.5px;color:#ebeb1e;letter-spacing:-0.5000px"><span class="us">_</span>Z9marioGamei</div>
<div class="t" style="left:353px;top:548.5px;color:#cccccc;letter-spacing:-0.5000px">+68</div>
<div class="t" style="left:392px;top:548.5px;color:#cccccc;letter-spacing:-0.5000px"><span class="ab">&gt;</span>:</div>
<div class="t" style="left:431px;top:548.5px;color:#0ec07b;letter-spacing:-0.5000px">mov</div>
<div class="t" style="left:522px;top:548.5px;color:#e35a5a;letter-spacing:-0.5000px">rdi</div>
<div class="t" style="left:561px;top:548.5px;color:#cccccc;letter-spacing:-0.5000px">,</div>
<div class="t" style="left:574px;top:548.5px;color:#e35a5a;letter-spacing:-0.5000px">rax</div>
<div class="t" style="left:54px;top:579.5px;color:#4d95e4;letter-spacing:-0.5000px">0x40127d</div>
<svg class="z" style="left:54px;top:583px" width="13" height="20"><rect x="4" y="8" width="5" height="4" fill="#1a1a1a"/><line x1="2.6" y1="11.8" x2="11.0" y2="7.2" stroke="#4d95e4" stroke-width="1.85"/></svg>
<svg class="z" style="left:93px;top:583px" width="13" height="20"><rect x="4" y="8" width="5" height="4" fill="#1a1a1a"/><line x1="2.6" y1="11.8" x2="11.0" y2="7.2" stroke="#4d95e4" stroke-width="1.85"/></svg>
<div class="t" style="left:171px;top:579.5px;color:#cccccc;letter-spacing:-0.5000px"><span class="ab">&lt;</span></div>
<div class="t" style="left:184px;top:579.5px;color:#ebeb1e;letter-spacing:-0.5000px"><span class="us">_</span>Z9marioGamei</div>
<div class="t" style="left:353px;top:579.5px;color:#cccccc;letter-spacing:-0.5000px">+71</div>
<div class="t" style="left:392px;top:579.5px;color:#cccccc;letter-spacing:-0.5000px"><span class="ab">&gt;</span>:</div>
<div class="t" style="left:431px;top:579.5px;color:#0ec07b;letter-spacing:-0.5000px">call</div>
<div class="t" style="left:522px;top:579.5px;color:#4d95e4;letter-spacing:-0.5000px">0x4010d0</div>
<svg class="z" style="left:522px;top:583px" width="13" height="20"><rect x="4" y="8" width="5" height="4" fill="#1a1a1a"/><line x1="2.6" y1="11.8" x2="11.0" y2="7.2" stroke="#4d95e4" stroke-width="1.85"/></svg>
<svg class="z" style="left:561px;top:583px" width="13" height="20"><rect x="4" y="8" width="5" height="4" fill="#1a1a1a"/><line x1="2.6" y1="11.8" x2="11.0" y2="7.2" stroke="#4d95e4" stroke-width="1.85"/></svg>
<svg class="z" style="left:587px;top:583px" width="13" height="20"><rect x="4" y="8" width="5" height="4" fill="#1a1a1a"/><line x1="2.6" y1="11.8" x2="11.0" y2="7.2" stroke="#4d95e4" stroke-width="1.85"/></svg>
<svg class="z" style="left:613px;top:583px" width="13" height="20"><rect x="4" y="8" width="5" height="4" fill="#1a1a1a"/><line x1="2.6" y1="11.8" x2="11.0" y2="7.2" stroke="#4d95e4" stroke-width="1.85"/></svg>
<div class="t" style="left:639px;top:579.5px;color:#cccccc;letter-spacing:-0.5000px"><span class="ab">&lt;</span></div>
<div class="t" style="left:652px;top:579.5px;color:#e35a5a;letter-spacing:-0.5000px">puts@plt</div>
<div class="t" style="left:756px;top:579.5px;color:#cccccc;letter-spacing:-0.5000px"><span class="ab">&gt;</span></div>
<div class="t" style="left:54px;top:610.5px;color:#4d95e4;letter-spacing:-0.5000px">0x401282</div>
<svg class="z" style="left:54px;top:614px" width="13" height="20"><rect x="4" y="8" width="5" height="4" fill="#1a1a1a"/><line x1="2.6" y1="11.8" x2="11.0" y2="7.2" stroke="#4d95e4" stroke-width="1.85"/></svg>
<svg class="z" style="left:93px;top:614px" width="13" height="20"><rect x="4" y="8" width="5" height="4" fill="#1a1a1a"/><line x1="2.6" y1="11.8" x2="11.0" y2="7.2" stroke="#4d95e4" stroke-width="1.85"/></svg>
<div class="t" style="left:171px;top:610.5px;color:#cccccc;letter-spacing:-0.5000px"><span class="ab">&lt;</span></div>
<div class="t" style="left:184px;top:610.5px;color:#ebeb1e;letter-spacing:-0.5000px"><span class="us">_</span>Z9marioGamei</div>
<div class="t" style="left:353px;top:610.5px;color:#cccccc;letter-spacing:-0.5000px">+76</div>
<div class="t" style="left:392px;top:610.5px;color:#cccccc;letter-spacing:-0.5000px"><span class="ab">&gt;</span>:</div>
<div class="t" style="left:431px;top:610.5px;color:#0ec07b;letter-spacing:-0.5000px">lea</div>
<div class="t" style="left:522px;top:610.5px;color:#e35a5a;letter-spacing:-0.5000px">rax</div>
<div class="t" style="left:561px;top:610.5px;color:#cccccc;letter-spacing:-0.5000px">,</div>
<div class="t" style="left:574px;top:610.5px;color:#cccccc;letter-spacing:-0.5000px">[</div>
<div class="t" style="left:587px;top:610.5px;color:#e35a5a;letter-spacing:-0.5000px">rip</div>
<div class="t u" style="left:626px;top:610.5px;color:#e35a5a;letter-spacing:-0.5000px">+</div>
<div class="t" style="left:639px;top:610.5px;color:#4d95e4;letter-spacing:-0.5000px">0xdb8</div>
<svg class="z" style="left:639px;top:614px" width="13" height="20"><rect x="4" y="8" width="5" height="4" fill="#1a1a1a"/><line x1="2.6" y1="11.8" x2="11.0" y2="7.2" stroke="#4d95e4" stroke-width="1.85"/></svg>
<div class="t" style="left:704px;top:610.5px;color:#cccccc;letter-spacing:-0.5000px">]</div>
<div class="t" style="left:821px;top:610.5px;color:#e5e5e5;letter-spacing:-0.5000px"># 0x402041</div>
<svg class="z" style="left:847px;top:614px" width="13" height="20"><rect x="4" y="8" width="5" height="4" fill="#1a1a1a"/><line x1="2.6" y1="11.8" x2="11.0" y2="7.2" stroke="#e5e5e5" stroke-width="1.85"/></svg>
<svg class="z" style="left:886px;top:614px" width="13" height="20"><rect x="4" y="8" width="5" height="4" fill="#1a1a1a"/><line x1="2.6" y1="11.8" x2="11.0" y2="7.2" stroke="#e5e5e5" stroke-width="1.85"/></svg>
<svg class="z" style="left:912px;top:614px" width="13" height="20"><rect x="4" y="8" width="5" height="4" fill="#1a1a1a"/><line x1="2.6" y1="11.8" x2="11.0" y2="7.2" stroke="#e5e5e5" stroke-width="1.85"/></svg>
<div class="t" style="left:54px;top:641.5px;color:#4d95e4;letter-spacing:-0.5000px">0x401289</div>
<svg class="z" style="left:54px;top:645px" width="13" height="20"><rect x="4" y="8" width="5" height="4" fill="#1a1a1a"/><line x1="2.6" y1="11.8" x2="11.0" y2="7.2" stroke="#4d95e4" stroke-width="1.85"/></svg>
<svg class="z" style="left:93px;top:645px" width="13" height="20"><rect x="4" y="8" width="5" height="4" fill="#1a1a1a"/><line x1="2.6" y1="11.8" x2="11.0" y2="7.2" stroke="#4d95e4" stroke-width="1.85"/></svg>
<div class="t" style="left:171px;top:641.5px;color:#cccccc;letter-spacing:-0.5000px"><span class="ab">&lt;</span></div>
<div class="t" style="left:184px;top:641.5px;color:#ebeb1e;letter-spacing:-0.5000px"><span class="us">_</span>Z9marioGamei</div>
<div class="t" style="left:353px;top:641.5px;color:#cccccc;letter-spacing:-0.5000px">+83</div>
<div class="t" style="left:392px;top:641.5px;color:#cccccc;letter-spacing:-0.5000px"><span class="ab">&gt;</span>:</div>
<div class="t" style="left:431px;top:641.5px;color:#0ec07b;letter-spacing:-0.5000px">mov</div>
<div class="t" style="left:522px;top:641.5px;color:#e35a5a;letter-spacing:-0.5000px">rdi</div>
<div class="t" style="left:561px;top:641.5px;color:#cccccc;letter-spacing:-0.5000px">,</div>
<div class="t" style="left:574px;top:641.5px;color:#e35a5a;letter-spacing:-0.5000px">rax</div>
<div class="t" style="left:54px;top:672.5px;color:#4d95e4;letter-spacing:-0.5000px">0x40128c</div>
<svg class="z" style="left:54px;top:676px" width="13" height="20"><rect x="4" y="8" width="5" height="4" fill="#1a1a1a"/><line x1="2.6" y1="11.8" x2="11.0" y2="7.2" stroke="#4d95e4" stroke-width="1.85"/></svg>
<svg class="z" style="left:93px;top:676px" width="13" height="20"><rect x="4" y="8" width="5" height="4" fill="#1a1a1a"/><line x1="2.6" y1="11.8" x2="11.0" y2="7.2" stroke="#4d95e4" stroke-width="1.85"/></svg>
<div class="t" style="left:171px;top:672.5px;color:#cccccc;letter-spacing:-0.5000px"><span class="ab">&lt;</span></div>
<div class="t" style="left:184px;top:672.5px;color:#ebeb1e;letter-spacing:-0.5000px"><span class="us">_</span>Z9marioGamei</div>
<div class="t" style="left:353px;top:672.5px;color:#cccccc;letter-spacing:-0.5000px">+86</div>
<div class="t" style="left:392px;top:672.5px;color:#cccccc;letter-spacing:-0.5000px"><span class="ab">&gt;</span>:</div>
<div class="t" style="left:431px;top:672.5px;color:#0ec07b;letter-spacing:-0.5000px">call</div>
<div class="t" style="left:522px;top:672.5px;color:#4d95e4;letter-spacing:-0.5000px">0x4010d0</div>
<svg class="z" style="left:522px;top:676px" width="13" height="20"><rect x="4" y="8" width="5" height="4" fill="#1a1a1a"/><line x1="2.6" y1="11.8" x2="11.0" y2="7.2" stroke="#4d95e4" stroke-width="1.85"/></svg>
<svg class="z" style="left:561px;top:676px" width="13" height="20"><rect x="4" y="8" width="5" height="4" fill="#1a1a1a"/><line x1="2.6" y1="11.8" x2="11.0" y2="7.2" stroke="#4d95e4" stroke-width="1.85"/></svg>
<svg class="z" style="left:587px;top:676px" width="13" height="20"><rect x="4" y="8" width="5" height="4" fill="#1a1a1a"/><line x1="2.6" y1="11.8" x2="11.0" y2="7.2" stroke="#4d95e4" stroke-width="1.85"/></svg>
<svg class="z" style="left:613px;top:676px" width="13" height="20"><rect x="4" y="8" width="5" height="4" fill="#1a1a1a"/><line x1="2.6" y1="11.8" x2="11.0" y2="7.2" stroke="#4d95e4" stroke-width="1.85"/></svg>
<div class="t" style="left:639px;top:672.5px;color:#cccccc;letter-spacing:-0.5000px"><span class="ab">&lt;</span></div>
<div class="t" style="left:652px;top:672.5px;color:#e35a5a;letter-spacing:-0.5000px">puts@plt</div>
<div class="t" style="left:756px;top:672.5px;color:#cccccc;letter-spacing:-0.5000px"><span class="ab">&gt;</span></div>
<div class="t" style="left:54px;top:703.5px;color:#4d95e4;letter-spacing:-0.5000px">0x401291</div>
<svg class="z" style="left:54px;top:707px" width="13" height="20"><rect x="4" y="8" width="5" height="4" fill="#1a1a1a"/><line x1="2.6" y1="11.8" x2="11.0" y2="7.2" stroke="#4d95e4" stroke-width="1.85"/></svg>
<svg class="z" style="left:93px;top:707px" width="13" height="20"><rect x="4" y="8" width="5" height="4" fill="#1a1a1a"/><line x1="2.6" y1="11.8" x2="11.0" y2="7.2" stroke="#4d95e4" stroke-width="1.85"/></svg>
<div class="t" style="left:171px;top:703.5px;color:#cccccc;letter-spacing:-0.5000px"><span class="ab">&lt;</span></div>
<div class="t" style="left:184px;top:703.5px;color:#ebeb1e;letter-spacing:-0.5000px"><span class="us">_</span>Z9marioGamei</div>
<div class="t" style="left:353px;top:703.5px;color:#cccccc;letter-spacing:-0.5000px">+91</div>
<div class="t" style="left:392px;top:703.5px;color:#cccccc;letter-spacing:-0.5000px"><span class="ab">&gt;</span>:</div>
<div class="t" style="left:431px;top:703.5px;color:#0ec07b;letter-spacing:-0.5000px">lea</div>
<div class="t" style="left:522px;top:703.5px;color:#e35a5a;letter-spacing:-0.5000px">rax</div>
<div class="t" style="left:561px;top:703.5px;color:#cccccc;letter-spacing:-0.5000px">,</div>
<div class="t" style="left:574px;top:703.5px;color:#cccccc;letter-spacing:-0.5000px">[</div>
<div class="t" style="left:587px;top:703.5px;color:#e35a5a;letter-spacing:-0.5000px">rip</div>
<div class="t u" style="left:626px;top:703.5px;color:#e35a5a;letter-spacing:-0.5000px">+</div>
<div class="t" style="left:639px;top:703.5px;color:#4d95e4;letter-spacing:-0.5000px">0xdb1</div>
<svg class="z" style="left:639px;top:707px" width="13" height="20"><rect x="4" y="8" width="5" height="4" fill="#1a1a1a"/><line x1="2.6" y1="11.8" x2="11.0" y2="7.2" stroke="#4d95e4" stroke-width="1.85"/></svg>
<div class="t" style="left:704px;top:703.5px;color:#cccccc;letter-spacing:-0.5000px">]</div>
<div class="t" style="left:821px;top:703.5px;color:#e5e5e5;letter-spacing:-0.5000px"># 0x402049</div>
<svg class="z" style="left:847px;top:707px" width="13" height="20"><rect x="4" y="8" width="5" height="4" fill="#1a1a1a"/><line x1="2.6" y1="11.8" x2="11.0" y2="7.2" stroke="#e5e5e5" stroke-width="1.85"/></svg>
<svg class="z" style="left:886px;top:707px" width="13" height="20"><rect x="4" y="8" width="5" height="4" fill="#1a1a1a"/><line x1="2.6" y1="11.8" x2="11.0" y2="7.2" stroke="#e5e5e5" stroke-width="1.85"/></svg>
<svg class="z" style="left:912px;top:707px" width="13" height="20"><rect x="4" y="8" width="5" height="4" fill="#1a1a1a"/><line x1="2.6" y1="11.8" x2="11.0" y2="7.2" stroke="#e5e5e5" stroke-width="1.85"/></svg>
<div class="t" style="left:54px;top:734.5px;color:#4d95e4;letter-spacing:-0.5000px">0x401298</div>
<svg class="z" style="left:54px;top:738px" width="13" height="20"><rect x="4" y="8" width="5" height="4" fill="#1a1a1a"/><line x1="2.6" y1="11.8" x2="11.0" y2="7.2" stroke="#4d95e4" stroke-width="1.85"/></svg>
<svg class="z" style="left:93px;top:738px" width="13" height="20"><rect x="4" y="8" width="5" height="4" fill="#1a1a1a"/><line x1="2.6" y1="11.8" x2="11.0" y2="7.2" stroke="#4d95e4" stroke-width="1.85"/></svg>
<div class="t" style="left:171px;top:734.5px;color:#cccccc;letter-spacing:-0.5000px"><span class="ab">&lt;</span></div>
<div class="t" style="left:184px;top:734.5px;color:#ebeb1e;letter-spacing:-0.5000px"><span class="us">_</span>Z9marioGamei</div>
<div class="t" style="left:353px;top:734.5px;color:#cccccc;letter-spacing:-0.5000px">+98</div>
<div class="t" style="left:392px;top:734.5px;color:#cccccc;letter-spacing:-0.5000px"><span class="ab">&gt;</span>:</div>
<div class="t" style="left:431px;top:734.5px;color:#0ec07b;letter-spacing:-0.5000px">mov</div>
<div class="t" style="left:522px;top:734.5px;color:#e35a5a;letter-spacing:-0.5000px">rdi</div>
<div class="t" style="left:561px;top:734.5px;color:#cccccc;letter-spacing:-0.5000px">,</div>
<div class="t" style="left:574px;top:734.5px;color:#e35a5a;letter-spacing:-0.5000px">rax</div>
<div class="t" style="left:54px;top:765.5px;color:#4d95e4;letter-spacing:-0.5000px">0x40129b</div>
<svg class="z" style="left:54px;top:769px" width="13" height="20"><rect x="4" y="8" width="5" height="4" fill="#1a1a1a"/><line x1="2.6" y1="11.8" x2="11.0" y2="7.2" stroke="#4d95e4" stroke-width="1.85"/></svg>
<svg class="z" style="left:93px;top:769px" width="13" height="20"><rect x="4" y="8" width="5" height="4" fill="#1a1a1a"/><line x1="2.6" y1="11.8" x2="11.0" y2="7.2" stroke="#4d95e4" stroke-width="1.85"/></svg>
<div class="t" style="left:171px;top:765.5px;color:#cccccc;letter-spacing:-0.5000px"><span class="ab">&lt;</span></div>
<div class="t" style="left:184px;top:765.5px;color:#ebeb1e;letter-spacing:-0.5000px"><span class="us">_</span>Z9marioGamei</div>
<div class="t" style="left:353px;top:765.5px;color:#cccccc;letter-spacing:-0.5000px">+101</div>
<svg class="z" style="left:379px;top:769px" width="13" height="20"><rect x="4" y="8" width="5" height="4" fill="#1a1a1a"/><line x1="2.6" y1="11.8" x2="11.0" y2="7.2" stroke="#cccccc" stroke-width="1.85"/></svg>
<div class="t" style="left:405px;top:765.5px;color:#cccccc;letter-spacing:-0.5000px"><span class="ab">&gt;</span>:</div>
<div class="t" style="left:535px;top:765.5px;color:#0ec07b;letter-spacing:-0.5000px">mov</div>
<div class="t" style="left:626px;top:765.5px;color:#e35a5a;letter-spacing:-0.5000px">eax</div>
<div class="t" style="left:665px;top:765.5px;color:#cccccc;letter-spacing:-0.5000px">,</div>
<div class="t" style="left:678px;top:765.5px;color:#4d95e4;letter-spacing:-0.5000px">0x0</div>
<svg class="z" style="left:678px;top:769px" width="13" height="20"><rect x="4" y="8" width="5" height="4" fill="#1a1a1a"/><line x1="2.6" y1="11.8" x2="11.0" y2="7.2" stroke="#4d95e4" stroke-width="1.85"/></svg>
<svg class="z" style="left:704px;top:769px" width="13" height="20"><rect x="4" y="8" width="5" height="4" fill="#1a1a1a"/><line x1="2.6" y1="11.8" x2="11.0" y2="7.2" stroke="#4d95e4" stroke-width="1.85"/></svg>
<div class="t" style="left:54px;top:796.5px;color:#4d95e4;letter-spacing:-0.5000px">0x4012a0</div>
<svg class="z" style="left:54px;top:800px" width="13" height="20"><rect x="4" y="8" width="5" height="4" fill="#1a1a1a"/><line x1="2.6" y1="11.8" x2="11.0" y2="7.2" stroke="#4d95e4" stroke-width="1.85"/></svg>
<svg class="z" style="left:93px;top:800px" width="13" height="20"><rect x="4" y="8" width="5" height="4" fill="#1a1a1a"/><line x1="2.6" y1="11.8" x2="11.0" y2="7.2" stroke="#4d95e4" stroke-width="1.85"/></svg>
<svg class="z" style="left:145px;top:800px" width="13" height="20"><rect x="4" y="8" width="5" height="4" fill="#1a1a1a"/><line x1="2.6" y1="11.8" x2="11.0" y2="7.2" stroke="#4d95e4" stroke-width="1.85"/></svg>
<div class="t" style="left:171px;top:796.5px;color:#cccccc;letter-spacing:-0.5000px"><span class="ab">&lt;</span></div>
<div class="t" style="left:184px;top:796.5px;color:#ebeb1e;letter-spacing:-0.5000px"><span class="us">_</span>Z9marioGamei</div>
<div class="t" style="left:353px;top:796.5px;color:#cccccc;letter-spacing:-0.5000px">+106</div>
<svg class="z" style="left:379px;top:800px" width="13" height="20"><rect x="4" y="8" width="5" height="4" fill="#1a1a1a"/><line x1="2.6" y1="11.8" x2="11.0" y2="7.2" stroke="#cccccc" stroke-width="1.85"/></svg>
<div class="t" style="left:405px;top:796.5px;color:#cccccc;letter-spacing:-0.5000px"><span class="ab">&gt;</span>:</div>
<div class="t" style="left:535px;top:796.5px;color:#0ec07b;letter-spacing:-0.5000px">call</div>
<div class="t" style="left:626px;top:796.5px;color:#4d95e4;letter-spacing:-0.5000px">0x401100</div>
<svg class="z" style="left:626px;top:800px" width="13" height="20"><rect x="4" y="8" width="5" height="4" fill="#1a1a1a"/><line x1="2.6" y1="11.8" x2="11.0" y2="7.2" stroke="#4d95e4" stroke-width="1.85"/></svg>
<svg class="z" style="left:665px;top:800px" width="13" height="20"><rect x="4" y="8" width="5" height="4" fill="#1a1a1a"/><line x1="2.6" y1="11.8" x2="11.0" y2="7.2" stroke="#4d95e4" stroke-width="1.85"/></svg>
<svg class="z" style="left:704px;top:800px" width="13" height="20"><rect x="4" y="8" width="5" height="4" fill="#1a1a1a"/><line x1="2.6" y1="11.8" x2="11.0" y2="7.2" stroke="#4d95e4" stroke-width="1.85"/></svg>
<svg class="z" style="left:717px;top:800px" width="13" height="20"><rect x="4" y="8" width="5" height="4" fill="#1a1a1a"/><line x1="2.6" y1="11.8" x2="11.0" y2="7.2" stroke="#4d95e4" stroke-width="1.85"/></svg>
<div class="t" style="left:743px;top:796.5px;color:#cccccc;letter-spacing:-0.5000px"><span class="ab">&lt;</span></div>
<div class="t" style="left:756px;top:796.5px;color:#e35a5a;letter-spacing:-0.5000px">printf@plt</div>
<div class="t" style="left:886px;top:796.5px;color:#cccccc;letter-spacing:-0.5000px"><span class="ab">&gt;</span></div>
<div class="t" style="left:54px;top:827.5px;color:#4d95e4;letter-spacing:-0.5000px">0x4012a5</div>
<svg class="z" style="left:54px;top:831px" width="13" height="20"><rect x="4" y="8" width="5" height="4" fill="#1a1a1a"/><line x1="2.6" y1="11.8" x2="11.0" y2="7.2" stroke="#4d95e4" stroke-width="1.85"/></svg>
<svg class="z" style="left:93px;top:831px" width="13" height="20"><rect x="4" y="8" width="5" height="4" fill="#1a1a1a"/><line x1="2.6" y1="11.8" x2="11.0" y2="7.2" stroke="#4d95e4" stroke-width="1.85"/></svg>
<div class="t" style="left:171px;top:827.5px;color:#cccccc;letter-spacing:-0.5000px"><span class="ab">&lt;</span></div>
<div class="t" style="left:184px;top:827.5px;color:#ebeb1e;letter-spacing:-0.5000px"><span class="us">_</span>Z9marioGamei</div>
<div class="t" style="left:353px;top:827.5px;color:#cccccc;letter-spacing:-0.5000px">+111</div>
<div class="t" style="left:405px;top:827.5px;color:#cccccc;letter-spacing:-0.5000px"><span class="ab">&gt;</span>:</div>
<div class="t" style="left:535px;top:827.5px;color:#0ec07b;letter-spacing:-0.5000px">lea</div>
<div class="t" style="left:626px;top:827.5px;color:#e35a5a;letter-spacing:-0.5000px">rax</div>
<div class="t" style="left:665px;top:827.5px;color:#cccccc;letter-spacing:-0.5000px">,</div>
<div class="t" style="left:678px;top:827.5px;color:#cccccc;letter-spacing:-0.5000px">[</div>
<div class="t" style="left:691px;top:827.5px;color:#e35a5a;letter-spacing:-0.5000px">rbp-0x20</div>
<svg class="z" style="left:743px;top:831px" width="13" height="20"><rect x="4" y="8" width="5" height="4" fill="#1a1a1a"/><line x1="2.6" y1="11.8" x2="11.0" y2="7.2" stroke="#e35a5a" stroke-width="1.85"/></svg>
<svg class="z" style="left:782px;top:831px" width="13" height="20"><rect x="4" y="8" width="5" height="4" fill="#1a1a1a"/><line x1="2.6" y1="11.8" x2="11.0" y2="7.2" stroke="#e35a5a" stroke-width="1.85"/></svg>
<div class="t" style="left:795px;top:827.5px;color:#cccccc;letter-spacing:-0.5000px">]</div>
<div class="t" style="left:54px;top:858.5px;color:#4d95e4;letter-spacing:-0.5000px">0x4012a9</div>
<svg class="z" style="left:54px;top:862px" width="13" height="20"><rect x="4" y="8" width="5" height="4" fill="#1a1a1a"/><line x1="2.6" y1="11.8" x2="11.0" y2="7.2" stroke="#4d95e4" stroke-width="1.85"/></svg>
<svg class="z" style="left:93px;top:862px" width="13" height="20"><rect x="4" y="8" width="5" height="4" fill="#1a1a1a"/><line x1="2.6" y1="11.8" x2="11.0" y2="7.2" stroke="#4d95e4" stroke-width="1.85"/></svg>
<div class="t" style="left:171px;top:858.5px;color:#cccccc;letter-spacing:-0.5000px"><span class="ab">&lt;</span></div>
<div class="t" style="left:184px;top:858.5px;color:#ebeb1e;letter-spacing:-0.5000px"><span class="us">_</span>Z9marioGamei</div>
<div class="t" style="left:353px;top:858.5px;color:#cccccc;letter-spacing:-0.5000px">+115</div>
<div class="t" style="left:405px;top:858.5px;color:#cccccc;letter-spacing:-0.5000px"><span class="ab">&gt;</span>:</div>
<div class="t" style="left:535px;top:858.5px;color:#0ec07b;letter-spacing:-0.5000px">mov</div>
<div class="t" style="left:626px;top:858.5px;color:#e35a5a;letter-spacing:-0.5000px">rsi</div>
<div class="t" style="left:665px;top:858.5px;color:#cccccc;letter-spacing:-0.5000px">,</div>
<div class="t" style="left:678px;top:858.5px;color:#e35a5a;letter-spacing:-0.5000px">rax</div>
<div class="t" style="left:54px;top:889.5px;color:#4d95e4;letter-spacing:-0.5000px">0x4012ac</div>
<svg class="z" style="left:54px;top:893px" width="13" height="20"><rect x="4" y="8" width="5" height="4" fill="#1a1a1a"/><line x1="2.6" y1="11.8" x2="11.0" y2="7.2" stroke="#4d95e4" stroke-width="1.85"/></svg>
<svg class="z" style="left:93px;top:893px" width="13" height="20"><rect x="4" y="8" width="5" height="4" fill="#1a1a1a"/><line x1="2.6" y1="11.8" x2="11.0" y2="7.2" stroke="#4d95e4" stroke-width="1.85"/></svg>
<div class="t" style="left:171px;top:889.5px;color:#cccccc;letter-spacing:-0.5000px"><span class="ab">&lt;</span></div>
<div class="t" style="left:184px;top:889.5px;color:#ebeb1e;letter-spacing:-0.5000px"><span class="us">_</span>Z9marioGamei</div>
<div class="t" style="left:353px;top:889.5px;color:#cccccc;letter-spacing:-0.5000px">+118</div>
<div class="t" style="left:405px;top:889.5px;color:#cccccc;letter-spacing:-0.5000px"><span class="ab">&gt;</span>:</div>
<div class="t" style="left:535px;top:889.5px;color:#0ec07b;letter-spacing:-0.5000px">lea</div>
<div class="t" style="left:626px;top:889.5px;color:#e35a5a;letter-spacing:-0.5000px">rax</div>
<div class="t" style="left:665px;top:889.5px;color:#cccccc;letter-spacing:-0.5000px">,</div>
<div class="t" style="left:678px;top:889.5px;color:#cccccc;letter-spacing:-0.5000px">[</div>
<div class="t" style="left:691px;top:889.5px;color:#e35a5a;letter-spacing:-0.5000px">rip</div>
<div class="t u" style="left:730px;top:889.5px;color:#e35a5a;letter-spacing:-0.5000px">+</div>
<div class="t" style="left:743px;top:889.5px;color:#4d95e4;letter-spacing:-0.5000px">0xd9a</div>
<svg class="z" style="left:743px;top:893px" width="13" height="20"><rect x="4" y="8" width="5" height="4" fill="#1a1a1a"/><line x1="2.6" y1="11.8" x2="11.0" y2="7.2" stroke="#4d95e4" stroke-width="1.85"/></svg>
<div class="t" style="left:808px;top:889.5px;color:#cccccc;letter-spacing:-0.5000px">]</div>
<div class="t" style="left:925px;top:889.5px;color:#e5e5e5;letter-spacing:-0.5000px"># 0x40204d</div>
<svg class="z" style="left:951px;top:893px" width="13" height="20"><rect x="4" y="8" width="5" height="4" fill="#1a1a1a"/><line x1="2.6" y1="11.8" x2="11.0" y2="7.2" stroke="#e5e5e5" stroke-width="1.85"/></svg>
<svg class="z" style="left:990px;top:893px" width="13" height="20"><rect x="4" y="8" width="5" height="4" fill="#1a1a1a"/><line x1="2.6" y1="11.8" x2="11.0" y2="7.2" stroke="#e5e5e5" stroke-width="1.85"/></svg>
<svg class="z" style="left:1016px;top:893px" width="13" height="20"><rect x="4" y="8" width="5" height="4" fill="#1a1a1a"/><line x1="2.6" y1="11.8" x2="11.0" y2="7.2" stroke="#e5e5e5" stroke-width="1.85"/></svg>
<div class="t" style="left:54px;top:920.5px;color:#4d95e4;letter-spacing:-0.5000px">0x4012b3</div>
<svg class="z" style="left:54px;top:924px" width="13" height="20"><rect x="4" y="8" width="5" height="4" fill="#1a1a1a"/><line x1="2.6" y1="11.8" x2="11.0" y2="7.2" stroke="#4d95e4" stroke-width="1.85"/></svg>
<svg class="z" style="left:93px;top:924px" width="13" height="20"><rect x="4" y="8" width="5" height="4" fill="#1a1a1a"/><line x1="2.6" y1="11.8" x2="11.0" y2="7.2" stroke="#4d95e4" stroke-width="1.85"/></svg>
<div class="t" style="left:171px;top:920.5px;color:#cccccc;letter-spacing:-0.5000px"><span class="ab">&lt;</span></div>
<div class="t" style="left:184px;top:920.5px;color:#ebeb1e;letter-spacing:-0.5000px"><span class="us">_</span>Z9marioGamei</div>
<div class="t" style="left:353px;top:920.5px;color:#cccccc;letter-spacing:-0.5000px">+125</div>
<div class="t" style="left:405px;top:920.5px;color:#cccccc;letter-spacing:-0.5000px"><span class="ab">&gt;</span>:</div>
<div class="t" style="left:535px;top:920.5px;color:#0ec07b;letter-spacing:-0.5000px">mov</div>
<div class="t" style="left:626px;top:920.5px;color:#e35a5a;letter-spacing:-0.5000px">rdi</div>
<div class="t" style="left:665px;top:920.5px;color:#cccccc;letter-spacing:-0.5000px">,</div>
<div class="t" style="left:678px;top:920.5px;color:#e35a5a;letter-spacing:-0.5000px">rax</div>
<div class="t" style="left:54px;top:951.5px;color:#4d95e4;letter-spacing:-0.5000px">0x4012b6</div>
<svg class="z" style="left:54px;top:955px" width="13" height="20"><rect x="4" y="8" width="5" height="4" fill="#1a1a1a"/><line x1="2.6" y1="11.8" x2="11.0" y2="7.2" stroke="#4d95e4" stroke-width="1.85"/></svg>
<svg class="z" style="left:93px;top:955px" width="13" height="20"><rect x="4" y="8" width="5" height="4" fill="#1a1a1a"/><line x1="2.6" y1="11.8" x2="11.0" y2="7.2" stroke="#4d95e4" stroke-width="1.85"/></svg>
<div class="t" style="left:171px;top:951.5px;color:#cccccc;letter-spacing:-0.5000px"><span class="ab">&lt;</span></div>
<div class="t" style="left:184px;top:951.5px;color:#ebeb1e;letter-spacing:-0.5000px"><span class="us">_</span>Z9marioGamei</div>
<div class="t" style="left:353px;top:951.5px;color:#cccccc;letter-spacing:-0.5000px">+128</div>
<div class="t" style="left:405px;top:951.5px;color:#cccccc;letter-spacing:-0.5000px"><span class="ab">&gt;</span>:</div>
<div class="t" style="left:535px;top:951.5px;color:#0ec07b;letter-spacing:-0.5000px">mov</div>
<div class="t" style="left:626px;top:951.5px;color:#e35a5a;letter-spacing:-0.5000px">eax</div>
<div class="t" style="left:665px;top:951.5px;color:#cccccc;letter-spacing:-0.5000px">,</div>
<div class="t" style="left:678px;top:951.5px;color:#4d95e4;letter-spacing:-0.5000px">0x0</div>
<svg class="z" style="left:678px;top:955px" width="13" height="20"><rect x="4" y="8" width="5" height="4" fill="#1a1a1a"/><line x1="2.6" y1="11.8" x2="11.0" y2="7.2" stroke="#4d95e4" stroke-width="1.85"/></svg>
<svg class="z" style="left:704px;top:955px" width="13" height="20"><rect x="4" y="8" width="5" height="4" fill="#1a1a1a"/><line x1="2.6" y1="11.8" x2="11.0" y2="7.2" stroke="#4d95e4" stroke-width="1.85"/></svg>
<div class="t" style="left:54px;top:982.5px;color:#4d95e4;letter-spacing:-0.5000px">0x4012bb</div>
<svg class="z" style="left:54px;top:986px" width="13" height="20"><rect x="4" y="8" width="5" height="4" fill="#1a1a1a"/><line x1="2.6" y1="11.8" x2="11.0" y2="7.2" stroke="#4d95e4" stroke-width="1.85"/></svg>
<svg class="z" style="left:93px;top:986px" width="13" height="20"><rect x="4" y="8" width="5" height="4" fill="#1a1a1a"/><line x1="2.6" y1="11.8" x2="11.0" y2="7.2" stroke="#4d95e4" stroke-width="1.85"/></svg>
<div class="t" style="left:171px;top:982.5px;color:#cccccc;letter-spacing:-0.5000px"><span class="ab">&lt;</span></div>
<div class="t" style="left:184px;top:982.5px;color:#ebeb1e;letter-spacing:-0.5000px"><span class="us">_</span>Z9marioGamei</div>
<div class="t" style="left:353px;top:982.5px;color:#cccccc;letter-spacing:-0.5000px">+133</div>
<div class="t" style="left:405px;top:982.5px;color:#cccccc;letter-spacing:-0.5000px"><span class="ab">&gt;</span>:</div>
<div class="t" style="left:535px;top:982.5px;color:#0ec07b;letter-spacing:-0.5000px">call</div>
<div class="t" style="left:626px;top:982.5px;color:#4d95e4;letter-spacing:-0.5000px">0x401130</div>
<svg class="z" style="left:626px;top:986px" width="13" height="20"><rect x="4" y="8" width="5" height="4" fill="#1a1a1a"/><line x1="2.6" y1="11.8" x2="11.0" y2="7.2" stroke="#4d95e4" stroke-width="1.85"/></svg>
<svg class="z" style="left:665px;top:986px" width="13" height="20"><rect x="4" y="8" width="5" height="4" fill="#1a1a1a"/><line x1="2.6" y1="11.8" x2="11.0" y2="7.2" stroke="#4d95e4" stroke-width="1.85"/></svg>
<svg class="z" style="left:717px;top:986px" width="13" height="20"><rect x="4" y="8" width="5" height="4" fill="#1a1a1a"/><line x1="2.6" y1="11.8" x2="11.0" y2="7.2" stroke="#4d95e4" stroke-width="1.85"/></svg>
<div class="t" style="left:743px;top:982.5px;color:#cccccc;letter-spacing:-0.5000px"><span class="ab">&lt;</span></div>
<div class="t" style="left:756px;top:982.5px;color:#e35a5a;letter-spacing:-0.5000px"><span class="us">_</span><span class="us">_</span>isoc99<span class="us">_</span>scanf@plt</div>
<div class="t" style="left:990px;top:982.5px;color:#cccccc;letter-spacing:-0.5000px"><span class="ab">&gt;</span></div>
<div class="t" style="left:54px;top:1013.5px;color:#4d95e4;letter-spacing:-0.5000px">0x4012c0</div>
<svg class="z" style="left:54px;top:1017px" width="13" height="20"><rect x="4" y="8" width="5" height="4" fill="#1a1a1a"/><line x1="2.6" y1="11.8" x2="11.0" y2="7.2" stroke="#4d95e4" stroke-width="1.85"/></svg>
<svg class="z" style="left:93px;top:1017px" width="13" height="20"><rect x="4" y="8" width="5" height="4" fill="#1a1a1a"/><line x1="2.6" y1="11.8" x2="11.0" y2="7.2" stroke="#4d95e4" stroke-width="1.85"/></svg>
<svg class="z" style="left:145px;top:1017px" width="13" height="20"><rect x="4" y="8" width="5" height="4" fill="#1a1a1a"/><line x1="2.6" y1="11.8" x2="11.0" y2="7.2" stroke="#4d95e4" stroke-width="1.85"/></svg>
<div class="t" style="left:171px;top:1013.5px;color:#cccccc;letter-spacing:-0.5000px"><span class="ab">&lt;</span></div>
<div class="t" style="left:184px;top:1013.5px;color:#ebeb1e;letter-spacing:-0.5000px"><span class="us">_</span>Z9marioGamei</div>
<div class="t" style="left:353px;top:1013.5px;color:#cccccc;letter-spacing:-0.5000px">+138</div>
<div class="t" style="left:405px;top:1013.5px;color:#cccccc;letter-spacing:-0.5000px"><span class="ab">&gt;</span>:</div>
<div class="t" style="left:535px;top:1013.5px;color:#0ec07b;letter-spacing:-0.5000px">mov</div>
<div class="t" style="left:626px;top:1013.5px;color:#e35a5a;letter-spacing:-0.5000px">eax</div>
<div class="t" style="left:665px;top:1013.5px;color:#cccccc;letter-spacing:-0.5000px">,</div>
<div class="t" style="left:678px;top:1013.5px;color:#e35a5a;letter-spacing:-0.5000px">DWORD PTR</div>
<div class="t" style="left:808px;top:1013.5px;color:#cccccc;letter-spacing:-0.5000px">[</div>
<div class="t" style="left:821px;top:1013.5px;color:#e35a5a;letter-spacing:-0.5000px">rbp-0x20</div>
<svg class="z" style="left:873px;top:1017px" width="13" height="20"><rect x="4" y="8" width="5" height="4" fill="#1a1a1a"/><line x1="2.6" y1="11.8" x2="11.0" y2="7.2" stroke="#e35a5a" stroke-width="1.85"/></svg>
<svg class="z" style="left:912px;top:1017px" width="13" height="20"><rect x="4" y="8" width="5" height="4" fill="#1a1a1a"/><line x1="2.6" y1="11.8" x2="11.0" y2="7.2" stroke="#e35a5a" stroke-width="1.85"/></svg>
<div class="t" style="left:925px;top:1013.5px;color:#cccccc;letter-spacing:-0.5000px">]</div>
<div class="t" style="left:54px;top:1044.5px;color:#4d95e4;letter-spacing:-0.5000px">0x4012c3</div>
<svg class="z" style="left:54px;top:1048px" width="13" height="20"><rect x="4" y="8" width="5" height="4" fill="#1a1a1a"/><line x1="2.6" y1="11.8" x2="11.0" y2="7.2" stroke="#4d95e4" stroke-width="1.85"/></svg>
<svg class="z" style="left:93px;top:1048px" width="13" height="20"><rect x="4" y="8" width="5" height="4" fill="#1a1a1a"/><line x1="2.6" y1="11.8" x2="11.0" y2="7.2" stroke="#4d95e4" stroke-width="1.85"/></svg>
<div class="t" style="left:171px;top:1044.5px;color:#cccccc;letter-spacing:-0.5000px"><span class="ab">&lt;</span></div>
<div class="t" style="left:184px;top:1044.5px;color:#ebeb1e;letter-spacing:-0.5000px"><span class="us">_</span>Z9marioGamei</div>
<div class="t" style="left:353px;top:1044.5px;color:#cccccc;letter-spacing:-0.5000px">+141</div>
<div class="t" style="left:405px;top:1044.5px;color:#cccccc;letter-spacing:-0.5000px"><span class="ab">&gt;</span>:</div>
<div class="t" style="left:535px;top:1044.5px;color:#0ec07b;letter-spacing:-0.5000px">cmp</div>
<div class="t" style="left:626px;top:1044.5px;color:#e35a5a;letter-spacing:-0.5000px">eax</div>
<div class="t" style="left:665px;top:1044.5px;color:#cccccc;letter-spacing:-0.5000px">,</div>
<div class="t" style="left:678px;top:1044.5px;color:#4d95e4;letter-spacing:-0.5000px">0x1</div>
<svg class="z" style="left:678px;top:1048px" width="13" height="20"><rect x="4" y="8" width="5" height="4" fill="#1a1a1a"/><line x1="2.6" y1="11.8" x2="11.0" y2="7.2" stroke="#4d95e4" stroke-width="1.85"/></svg>
<div class="t" style="left:54px;top:1075.5px;color:#4d95e4;letter-spacing:-0.5000px">0x4012c6</div>
<svg class="z" style="left:54px;top:1079px" width="13" height="20"><rect x="4" y="8" width="5" height="4" fill="#1a1a1a"/><line x1="2.6" y1="11.8" x2="11.0" y2="7.2" stroke="#4d95e4" stroke-width="1.85"/></svg>
<svg class="z" style="left:93px;top:1079px" width="13" height="20"><rect x="4" y="8" width="5" height="4" fill="#1a1a1a"/><line x1="2.6" y1="11.8" x2="11.0" y2="7.2" stroke="#4d95e4" stroke-width="1.85"/></svg>
<div class="t" style="left:171px;top:1075.5px;color:#cccccc;letter-spacing:-0.5000px"><span class="ab">&lt;</span></div>
<div class="t" style="left:184px;top:1075.5px;color:#ebeb1e;letter-spacing:-0.5000px"><span class="us">_</span>Z9marioGamei</div>
<div class="t" style="left:353px;top:1075.5px;color:#cccccc;letter-spacing:-0.5000px">+144</div>
<div class="t" style="left:405px;top:1075.5px;color:#cccccc;letter-spacing:-0.5000px"><span class="ab">&gt;</span>:</div>
<div class="t" style="left:535px;top:1075.5px;color:#0ec07b;letter-spacing:-0.5000px">je</div>
<div class="t" style="left:626px;top:1075.5px;color:#4d95e4;letter-spacing:-0.5000px">0x4012ea</div>
<svg class="z" style="left:626px;top:1079px" width="13" height="20"><rect x="4" y="8" width="5" height="4" fill="#1a1a1a"/><line x1="2.6" y1="11.8" x2="11.0" y2="7.2" stroke="#4d95e4" stroke-width="1.85"/></svg>
<svg class="z" style="left:665px;top:1079px" width="13" height="20"><rect x="4" y="8" width="5" height="4" fill="#1a1a1a"/><line x1="2.6" y1="11.8" x2="11.0" y2="7.2" stroke="#4d95e4" stroke-width="1.85"/></svg>
<div class="t" style="left:743px;top:1075.5px;color:#cccccc;letter-spacing:-0.5000px"><span class="ab">&lt;</span></div>
<div class="t" style="left:756px;top:1075.5px;color:#e35a5a;letter-spacing:-0.5000px"><span class="us">_</span>Z9marioGamei</div>
<div class="t" style="left:925px;top:1075.5px;color:#cccccc;letter-spacing:-0.5000px">+</div>
<div class="t" style="left:938px;top:1075.5px;color:#4d95e4;letter-spacing:-0.5000px">180</div>
<svg class="z" style="left:964px;top:1079px" width="13" height="20"><rect x="4" y="8" width="5" height="4" fill="#1a1a1a"/><line x1="2.6" y1="11.8" x2="11.0" y2="7.2" stroke="#4d95e4" stroke-width="1.85"/></svg>
<div class="t" style="left:977px;top:1075.5px;color:#cccccc;letter-spacing:-0.5000px"><span class="ab">&gt;</span></div>
<div class="t" style="left:54px;top:1106.5px;color:#4d95e4;letter-spacing:-0.5000px">0x4012c8</div>
<svg class="z" style="left:54px;top:1110px" width="13" height="20"><rect x="4" y="8" width="5" height="4" fill="#1a1a1a"/><line x1="2.6" y1="11.8" x2="11.0" y2="7.2" stroke="#4d95e4" stroke-width="1.85"/></svg>
<svg class="z" style="left:93px;top:1110px" width="13" height="20"><rect x="4" y="8" width="5" height="4" fill="#1a1a1a"/><line x1="2.6" y1="11.8" x2="11.0" y2="7.2" stroke="#4d95e4" stroke-width="1.85"/></svg>
<div class="t" style="left:171px;top:1106.5px;color:#cccccc;letter-spacing:-0.5000px"><span class="ab">&lt;</span></div>
<div class="t" style="left:184px;top:1106.5px;color:#ebeb1e;letter-spacing:-0.5000px"><span class="us">_</span>Z9marioGamei</div>
<div class="t" style="left:353px;top:1106.5px;color:#cccccc;letter-spacing:-0.5000px">+146</div>
<div class="t" style="left:405px;top:1106.5px;color:#cccccc;letter-spacing:-0.5000px"><span class="ab">&gt;</span>:</div>
<div class="t" style="left:535px;top:1106.5px;color:#0ec07b;letter-spacing:-0.5000px">cmp</div>
<div class="t" style="left:626px;top:1106.5px;color:#e35a5a;letter-spacing:-0.5000px">eax</div>
<div class="t" style="left:665px;top:1106.5px;color:#cccccc;letter-spacing:-0.5000px">,</div>
<div class="t" style="left:678px;top:1106.5px;color:#4d95e4;letter-spacing:-0.5000px">0x2</div>
<svg class="z" style="left:678px;top:1110px" width="13" height="20"><rect x="4" y="8" width="5" height="4" fill="#1a1a1a"/><line x1="2.6" y1="11.8" x2="11.0" y2="7.2" stroke="#4d95e4" stroke-width="1.85"/></svg>
<div class="t" style="left:54px;top:1137.5px;color:#4d95e4;letter-spacing:-0.5000px">0x4012cb</div>
<svg class="z" style="left:54px;top:1141px" width="13" height="20"><rect x="4" y="8" width="5" height="4" fill="#1a1a1a"/><line x1="2.6" y1="11.8" x2="11.0" y2="7.2" stroke="#4d95e4" stroke-width="1.85"/></svg>
<svg class="z" style="left:93px;top:1141px" width="13" height="20"><rect x="4" y="8" width="5" height="4" fill="#1a1a1a"/><line x1="2.6" y1="11.8" x2="11.0" y2="7.2" stroke="#4d95e4" stroke-width="1.85"/></svg>
<div class="t" style="left:171px;top:1137.5px;color:#cccccc;letter-spacing:-0.5000px"><span class="ab">&lt;</span></div>
<div class="t" style="left:184px;top:1137.5px;color:#ebeb1e;letter-spacing:-0.5000px"><span class="us">_</span>Z9marioGamei</div>
<div class="t" style="left:353px;top:1137.5px;color:#cccccc;letter-spacing:-0.5000px">+149</div>
<div class="t" style="left:405px;top:1137.5px;color:#cccccc;letter-spacing:-0.5000px"><span class="ab">&gt;</span>:</div>
<div class="t" style="left:535px;top:1137.5px;color:#0ec07b;letter-spacing:-0.5000px">je</div>
<div class="t" style="left:626px;top:1137.5px;color:#4d95e4;letter-spacing:-0.5000px">0x401396</div>
<svg class="z" style="left:626px;top:1141px" width="13" height="20"><rect x="4" y="8" width="5" height="4" fill="#1a1a1a"/><line x1="2.6" y1="11.8" x2="11.0" y2="7.2" stroke="#4d95e4" stroke-width="1.85"/></svg>
<svg class="z" style="left:665px;top:1141px" width="13" height="20"><rect x="4" y="8" width="5" height="4" fill="#1a1a1a"/><line x1="2.6" y1="11.8" x2="11.0" y2="7.2" stroke="#4d95e4" stroke-width="1.85"/></svg>
<div class="t" style="left:743px;top:1137.5px;color:#cccccc;letter-spacing:-0.5000px"><span class="ab">&lt;</span></div>
<div class="t" style="left:756px;top:1137.5px;color:#e35a5a;letter-spacing:-0.5000px"><span class="us">_</span>Z9marioGamei</div>
<div class="t" style="left:925px;top:1137.5px;color:#cccccc;letter-spacing:-0.5000px">+</div>
<div class="t" style="left:938px;top:1137.5px;color:#4d95e4;letter-spacing:-0.5000px">352</div>
<div class="t" style="left:977px;top:1137.5px;color:#cccccc;letter-spacing:-0.5000px"><span class="ab">&gt;</span></div>
<div class="t" style="left:54px;top:1168.5px;color:#4d95e4;letter-spacing:-0.5000px">0x4012d1</div>
<svg class="z" style="left:54px;top:1172px" width="13" height="20"><rect x="4" y="8" width="5" height="4" fill="#1a1a1a"/><line x1="2.6" y1="11.8" x2="11.0" y2="7.2" stroke="#4d95e4" stroke-width="1.85"/></svg>
<svg class="z" style="left:93px;top:1172px" width="13" height="20"><rect x="4" y="8" width="5" height="4" fill="#1a1a1a"/><line x1="2.6" y1="11.8" x2="11.0" y2="7.2" stroke="#4d95e4" stroke-width="1.85"/></svg>
<div class="t" style="left:171px;top:1168.5px;color:#cccccc;letter-spacing:-0.5000px"><span class="ab">&lt;</span></div>
<div class="t" style="left:184px;top:1168.5px;color:#ebeb1e;letter-spacing:-0.5000px"><span class="us">_</span>Z9marioGamei</div>
<div class="t" style="left:353px;top:1168.5px;color:#cccccc;letter-spacing:-0.5000px">+155</div>
<div class="t" style="left:405px;top:1168.5px;color:#cccccc;letter-spacing:-0.5000px"><span class="ab">&gt;</span>:</div>
<div class="t" style="left:535px;top:1168.5px;color:#0ec07b;letter-spacing:-0.5000px">nop</div>
<div class="t" style="left:54px;top:1199.5px;color:#4d95e4;letter-spacing:-0.5000px">0x4012d2</div>
<svg class="z" style="left:54px;top:1203px" width="13" height="20"><rect x="4" y="8" width="5" height="4" fill="#1a1a1a"/><line x1="2.6" y1="11.8" x2="11.0" y2="7.2" stroke="#4d95e4" stroke-width="1.85"/></svg>
<svg class="z" style="left:93px;top:1203px" width="13" height="20"><rect x="4" y="8" width="5" height="4" fill="#1a1a1a"/><line x1="2.6" y1="11.8" x2="11.0" y2="7.2" stroke="#4d95e4" stroke-width="1.85"/></svg>
<div class="t" style="left:171px;top:1199.5px;color:#cccccc;letter-spacing:-0.5000px"><span class="ab">&lt;</span></div>
<div class="t" style="left:184px;top:1199.5px;color:#ebeb1e;letter-spacing:-0.5000px"><span class="us">_</span>Z9marioGamei</div>
<div class="t" style="left:353px;top:1199.5px;color:#cccccc;letter-spacing:-0.5000px">+156</div>
<div class="t" style="left:405px;top:1199.5px;color:#cccccc;letter-spacing:-0.5000px"><span class="ab">&gt;</span>:</div>
<div class="t" style="left:535px;top:1199.5px;color:#0ec07b;letter-spacing:-0.5000px">mov</div>
<div class="t" style="left:626px;top:1199.5px;color:#e35a5a;letter-spacing:-0.5000px">rax</div>
<div class="t" style="left:665px;top:1199.5px;color:#cccccc;letter-spacing:-0.5000px">,</div>
<div class="t" style="left:678px;top:1199.5px;color:#e35a5a;letter-spacing:-0.5000px">QWORD PTR</div>
<div class="t" style="left:808px;top:1199.5px;color:#cccccc;letter-spacing:-0.5000px">[</div>
<div class="t" style="left:821px;top:1199.5px;color:#e35a5a;letter-spacing:-0.5000px">rbp-0x18</div>
<svg class="z" style="left:873px;top:1203px" width="13" height="20"><rect x="4" y="8" width="5" height="4" fill="#1a1a1a"/><line x1="2.6" y1="11.8" x2="11.0" y2="7.2" stroke="#e35a5a" stroke-width="1.85"/></svg>
<div class="t" style="left:925px;top:1199.5px;color:#cccccc;letter-spacing:-0.5000px">]</div>
<div class="t" style="left:54px;top:1230.5px;color:#4d95e4;letter-spacing:-0.5000px">0x4012d6</div>
<svg class="z" style="left:54px;top:1234px" width="13" height="20"><rect x="4" y="8" width="5" height="4" fill="#1a1a1a"/><line x1="2.6" y1="11.8" x2="11.0" y2="7.2" stroke="#4d95e4" stroke-width="1.85"/></svg>
<svg class="z" style="left:93px;top:1234px" width="13" height="20"><rect x="4" y="8" width="5" height="4" fill="#1a1a1a"/><line x1="2.6" y1="11.8" x2="11.0" y2="7.2" stroke="#4d95e4" stroke-width="1.85"/></svg>
<div class="t" style="left:171px;top:1230.5px;color:#cccccc;letter-spacing:-0.5000px"><span class="ab">&lt;</span></div>
<div class="t" style="left:184px;top:1230.5px;color:#ebeb1e;letter-spacing:-0.5000px"><span class="us">_</span>Z9marioGamei</div>
<div class="t" style="left:353px;top:1230.5px;color:#cccccc;letter-spacing:-0.5000px">+160</div>
<svg class="z" style="left:392px;top:1234px" width="13" height="20"><rect x="4" y="8" width="5" height="4" fill="#1a1a1a"/><line x1="2.6" y1="11.8" x2="11.0" y2="7.2" stroke="#cccccc" stroke-width="1.85"/></svg>
<div class="t" style="left:405px;top:1230.5px;color:#cccccc;letter-spacing:-0.5000px"><span class="ab">&gt;</span>:</div>
<div class="t" style="left:535px;top:1230.5px;color:#0ec07b;letter-spacing:-0.5000px">sub</div>
<div class="t" style="left:626px;top:1230.5px;color:#e35a5a;letter-spacing:-0.5000px">rax</div>
<div class="t" style="left:665px;top:1230.5px;color:#cccccc;letter-spacing:-0.5000px">,</div>
<div class="t" style="left:678px;top:1230.5px;color:#e35a5a;letter-spacing:-0.5000px">QWORD PTR fs</div>
<div class="t" style="left:834px;top:1230.5px;color:#cccccc;letter-spacing:-0.5000px">:</div>
<div class="t" style="left:847px;top:1230.5px;color:#4d95e4;letter-spacing:-0.5000px">0x28</div>
<svg class="z" style="left:847px;top:1234px" width="13" height="20"><rect x="4" y="8" width="5" height="4" fill="#1a1a1a"/><line x1="2.6" y1="11.8" x2="11.0" y2="7.2" stroke="#4d95e4" stroke-width="1.85"/></svg>
<div class="t" style="left:54px;top:1261.5px;color:#4d95e4;letter-spacing:-0.5000px">0x4012df</div>
<svg class="z" style="left:54px;top:1265px" width="13" height="20"><rect x="4" y="8" width="5" height="4" fill="#1a1a1a"/><line x1="2.6" y1="11.8" x2="11.0" y2="7.2" stroke="#4d95e4" stroke-width="1.85"/></svg>
<svg class="z" style="left:93px;top:1265px" width="13" height="20"><rect x="4" y="8" width="5" height="4" fill="#1a1a1a"/><line x1="2.6" y1="11.8" x2="11.0" y2="7.2" stroke="#4d95e4" stroke-width="1.85"/></svg>
<div class="t" style="left:171px;top:1261.5px;color:#cccccc;letter-spacing:-0.5000px"><span class="ab">&lt;</span></div>
<div class="t" style="left:184px;top:1261.5px;color:#ebeb1e;letter-spacing:-0.5000px"><span class="us">_</span>Z9marioGamei</div>
<div class="t" style="left:353px;top:1261.5px;color:#cccccc;letter-spacing:-0.5000px">+169</div>
<div class="t" style="left:405px;top:1261.5px;color:#cccccc;letter-spacing:-0.5000px"><span class="ab">&gt;</span>:</div>
<div class="t" style="left:535px;top:1261.5px;color:#0ec07b;letter-spacing:-0.5000px">je</div>
<div class="t" style="left:626px;top:1261.5px;color:#4d95e4;letter-spacing:-0.5000px">0x401434</div>
<svg class="z" style="left:626px;top:1265px" width="13" height="20"><rect x="4" y="8" width="5" height="4" fill="#1a1a1a"/><line x1="2.6" y1="11.8" x2="11.0" y2="7.2" stroke="#4d95e4" stroke-width="1.85"/></svg>
<svg class="z" style="left:665px;top:1265px" width="13" height="20"><rect x="4" y="8" width="5" height="4" fill="#1a1a1a"/><line x1="2.6" y1="11.8" x2="11.0" y2="7.2" stroke="#4d95e4" stroke-width="1.85"/></svg>
<div class="t" style="left:743px;top:1261.5px;color:#cccccc;letter-spacing:-0.5000px"><span class="ab">&lt;</span></div>
<div class="t" style="left:756px;top:1261.5px;color:#e35a5a;letter-spacing:-0.5000px"><span class="us">_</span>Z9marioGamei</div>
<div class="t" style="left:925px;top:1261.5px;color:#cccccc;letter-spacing:-0.5000px">+</div>
<div class="t" style="left:938px;top:1261.5px;color:#4d95e4;letter-spacing:-0.5000px">510</div>
<svg class="z" style="left:964px;top:1265px" width="13" height="20"><rect x="4" y="8" width="5" height="4" fill="#1a1a1a"/><line x1="2.6" y1="11.8" x2="11.0" y2="7.2" stroke="#4d95e4" stroke-width="1.85"/></svg>
<div class="t" style="left:977px;top:1261.5px;color:#cccccc;letter-spacing:-0.5000px"><span class="ab">&gt;</span></div>
<div id="dbox"><span>d</span></div>
<div id="sep"></div><div id="tab"></div><div id="icon"></div><div id="tick"></div>
</body></html>
